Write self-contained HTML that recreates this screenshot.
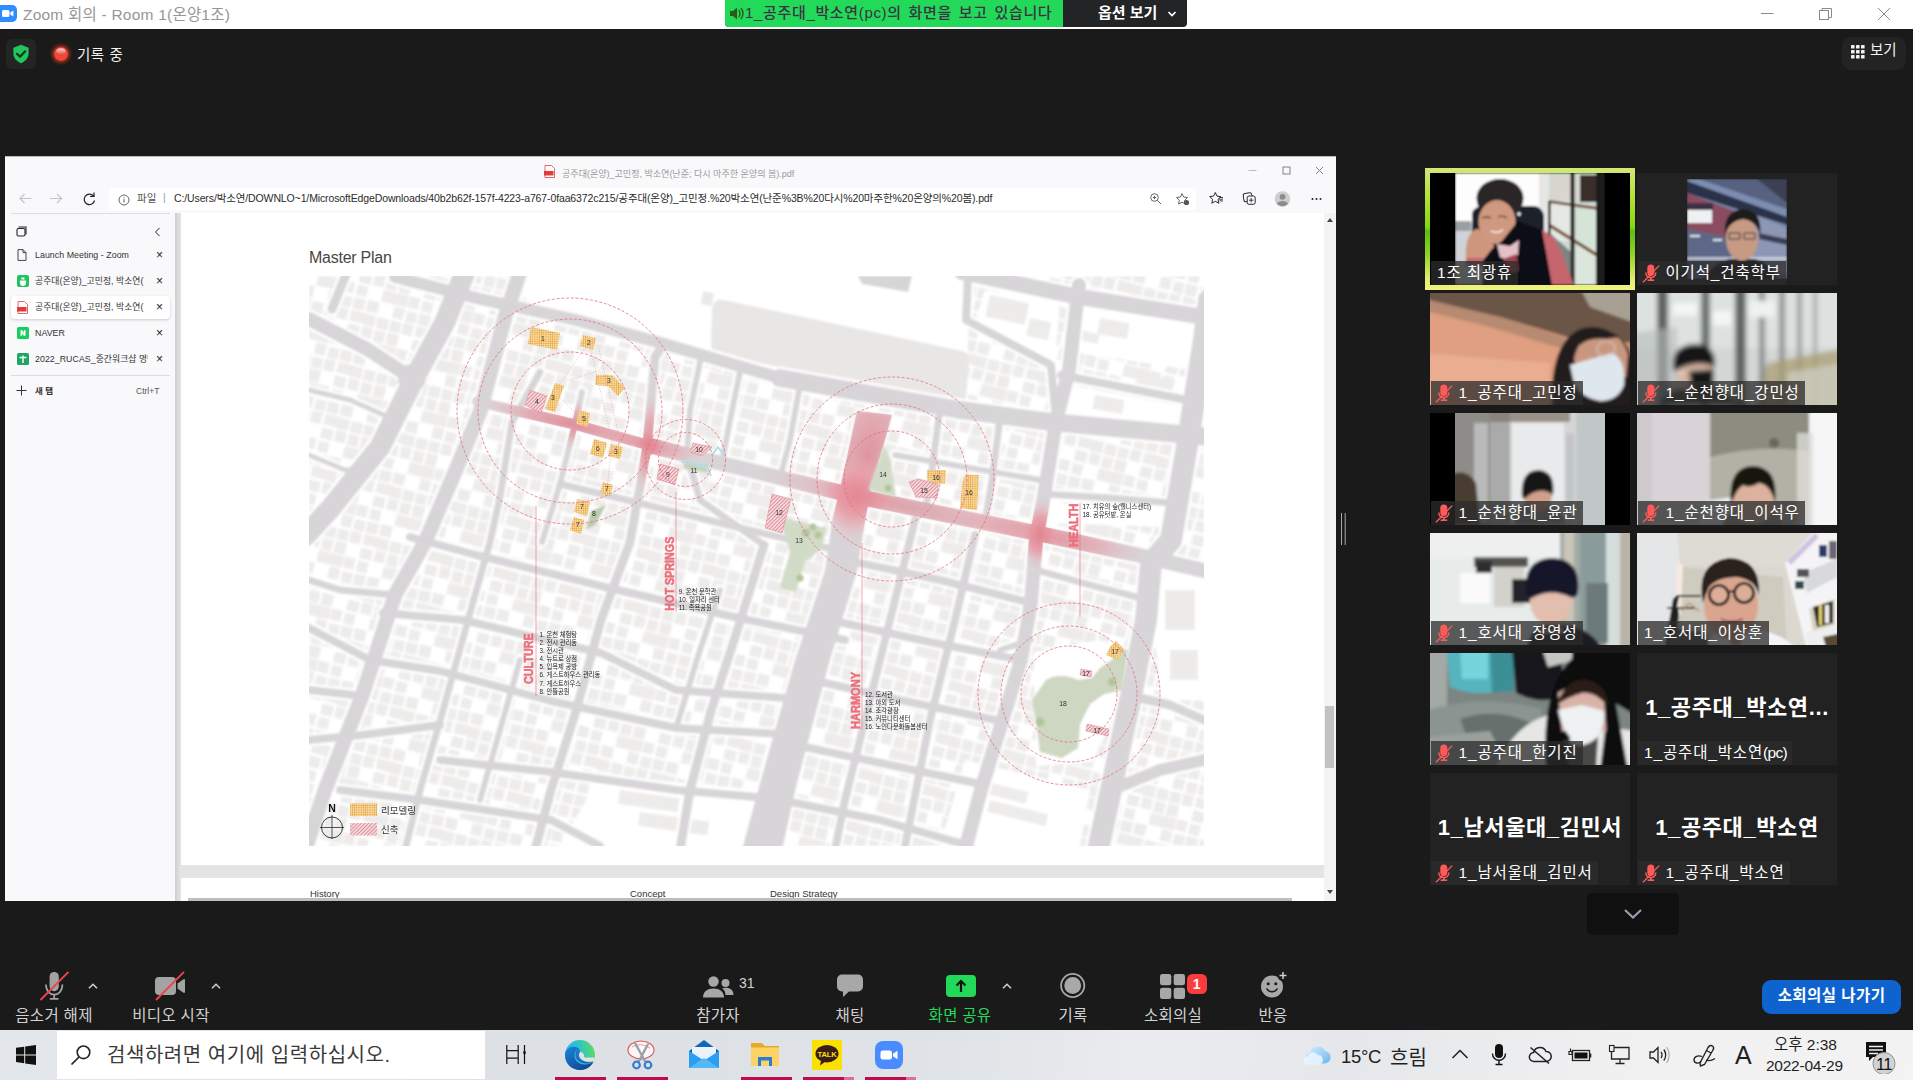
<!DOCTYPE html>
<html lang="ko">
<head>
<meta charset="utf-8">
<title>Zoom 회의 - Room 1(온양1조)</title>
<style>
*{box-sizing:border-box;margin:0;padding:0}
html,body{width:1913px;height:1080px;overflow:hidden;background:#1a1a1a}
body{position:relative;font-family:"Liberation Sans","Noto Sans CJK KR",sans-serif;color:#fff}
.abs{position:absolute}
#titlebar{position:absolute;left:0;top:0;width:1913px;height:29px;background:#fff}
#titlebar .ttl{position:absolute;left:23px;top:2px;font-size:15.5px;color:#969696;white-space:nowrap;letter-spacing:.22px}
#banner{position:absolute;left:725px;top:0;width:462px;height:27px;border-radius:0 0 4px 4px;background:#232426;overflow:hidden}
#banner .g{position:absolute;left:0;top:0;width:338px;height:27px;background:#23d959;color:#3a3442;font-size:15px;font-weight:500;white-space:nowrap;padding-left:20px;line-height:26px;letter-spacing:.66px;word-spacing:2px}
#banner .o{position:absolute;left:338px;top:0;width:124px;height:27px;color:#fff;font-size:15px;font-weight:700;text-align:left;padding-left:35px;line-height:26px;white-space:nowrap}

#shield{position:absolute;left:6px;top:39px;width:30px;height:30px;border-radius:6px;background:#242424}
#rec{position:absolute;left:77px;top:43px;font-size:14.5px;color:#f2f2f2;white-space:nowrap;letter-spacing:.3px;word-spacing:1px}
#viewbtn{position:absolute;left:1842px;top:37px;width:64px;height:33px;border-radius:9px;background:#232323;color:#f4f4f4;font-size:14.5px;line-height:27px;padding-left:28px;white-space:nowrap}
.tile{position:absolute;width:200px;height:112px;background:#222;overflow:hidden}
.tile svg.v{position:absolute;left:0;top:0}
.lbl{position:absolute;left:0;bottom:0;height:24px;background:rgba(44,44,44,.76);color:#fff;font-size:15.5px;line-height:23px;white-space:nowrap;padding:0 5.500px 0 27.500px;letter-spacing:.85px}
.lbl.nm{padding-left:6px}
.lbl svg{position:absolute;left:3.500px;top:2px}
.big{position:absolute;left:0;width:200px;text-align:center;color:#fff;font-weight:700;font-size:22px;white-space:nowrap;letter-spacing:.6px}
#more{position:absolute;left:1587px;top:893px;width:92px;height:42px;border-radius:5px;background:#101010}
</style>
</head>
<body>
<!-- TITLEBAR -->
<div id="titlebar">
  <svg class="abs" style="left:0;top:5px" width="18" height="18" viewBox="0 0 18 18"><rect x="-4" y="0" width="21" height="17" rx="5" fill="#2d8cff"/><rect x="2" y="5" width="7.5" height="7" rx="1.6" fill="#fff"/><path d="M10.3 7.6 L13.4 5.6 V11.4 L10.3 9.4Z" fill="#fff"/></svg>
  <div class="ttl">Zoom 회의 - Room 1(온양1조)</div>
  <svg class="abs" style="left:1750px;top:0" width="163" height="29" viewBox="0 0 163 29"><g stroke="#8a8a8a" stroke-width="1" fill="none"><path d="M11 13.5H23.500"/><rect x="69.500" y="10.500" width="9" height="9"/><path d="M72 10.500V8.500H81.500V17.500H79"/><path d="M128 8 L140 20 M140 8 L128 20"/></g></svg>
</div>
<div id="banner">
  <div class="g" id="bg"><svg class="abs" style="left:4px;top:6px" width="16" height="15" viewBox="0 0 16 15"><path d="M1 5h3l4-3.500v12L4 10H1z" fill="#2a5a16"/><path d="M10 4.500c1.300 1.500 1.300 4.500 0 6M12.200 2.500c2.400 2.800 2.400 7.200 0 10" stroke="#2a5a16" stroke-width="1.400" fill="none" stroke-linecap="round"/></svg>1_공주대_박소연(pc)의 화면을 보고 있습니다</div>
  <div class="o">옵션 보기<svg class="abs" style="left:104px;top:10px" width="10" height="8" viewBox="0 0 10 8"><path d="M1.500 2 L5 5.500 L8.500 2" stroke="#fff" stroke-width="1.700" fill="none"/></svg></div>
</div>
<div id="shield"><svg class="abs" style="left:6px;top:5px" width="18" height="20" viewBox="0 0 18 20"><path d="M9 .8 L16.600 3.800 V9.500 C16.600 14 13.200 17.500 9 19.200 C4.800 17.500 1.400 14 1.400 9.500 V3.800Z" fill="#22c55e"/><path d="M5 9.800 L8 12.800 L13.200 7.300" stroke="#14301d" stroke-width="2.100" fill="none" stroke-linecap="round" stroke-linejoin="round"/></svg></div>
<svg class="abs" style="left:47px;top:40px" width="28" height="28" viewBox="0 0 28 28"><defs><radialGradient id="rg" cx=".5" cy=".5" r=".5"><stop offset="0" stop-color="#ff6a5a"/><stop offset=".5" stop-color="#f0493c"/><stop offset=".62" stop-color="#b2301f" stop-opacity=".75"/><stop offset="1" stop-color="#5a1a10" stop-opacity="0"/></radialGradient><linearGradient id="rh" x1="0" y1="0" x2="0" y2="1"><stop offset="0" stop-color="#fff" stop-opacity=".75"/><stop offset="1" stop-color="#fff" stop-opacity=".05"/></linearGradient></defs><circle cx="14" cy="14" r="12" fill="url(#rg)"/><circle cx="14" cy="14" r="6.500" fill="#ee4a3c"/><ellipse cx="14" cy="11.300" rx="4.600" ry="3" fill="url(#rh)"/></svg>
<div id="rec">기록 중</div>
<div id="viewbtn"><svg class="abs" style="left:9px;top:8px" width="14" height="14" viewBox="0 0 14 14" fill="#f0f0f0"><rect x="0" y="0" width="3.600" height="3.600" rx=".6"/><rect x="5" y="0" width="3.600" height="3.600" rx=".6"/><rect x="10" y="0" width="3.600" height="3.600" rx=".6"/><rect x="0" y="5" width="3.600" height="3.600" rx=".6"/><rect x="5" y="5" width="3.600" height="3.600" rx=".6"/><rect x="10" y="5" width="3.600" height="3.600" rx=".6"/><rect x="0" y="10" width="3.600" height="3.600" rx=".6"/><rect x="5" y="10" width="3.600" height="3.600" rx=".6"/><rect x="10" y="10" width="3.600" height="3.600" rx=".6"/></svg>보기</div>
<!-- SHARE -->
<style>
#share{position:absolute;left:5px;top:156px;width:1331px;height:745px;background:#fff;overflow:hidden;font-family:"Liberation Sans","Noto Sans CJK KR",sans-serif;color:#333}
#share .chrome{position:absolute;left:0;top:0;width:1331px;height:57px;background:#f9f8fa;border-top:1px solid #b9b9b9}
#share .ttl{position:absolute;left:557px;top:9px;font-size:9.100px;color:#9b9b9b;white-space:nowrap;letter-spacing:-.05px}
#addr{position:absolute;left:104px;top:31px;width:1087px;height:22px;border-radius:4px;background:#fff;font-size:10.500px;line-height:21px;white-space:nowrap;color:#2b2b2b}
#side{position:absolute;left:0;top:57px;width:170px;height:688px;background:#f9f8fa;font-size:8.800px;color:#333}
#side .it{position:absolute;left:6px;width:159px;height:23px;border-radius:4px;line-height:22px;padding-left:24px;white-space:nowrap;overflow:hidden;letter-spacing:.05px}
#side .it .tx{display:block;width:113px;overflow:hidden;white-space:nowrap}
#side .it .x{position:absolute;right:7px;top:0;font-size:12px;color:#222}
#side .it svg{position:absolute;left:6px;top:5px}
#side .it.on{background:#fff;box-shadow:0 1px 3px rgba(0,0,0,.18)}
#pdf{position:absolute;left:170px;top:57px;width:1161px;height:688px;background:linear-gradient(90deg,#cfcfd0 0,#e2e2e3 5px,#e4e4e5 6px);overflow:hidden}
#pdf .pg{position:absolute;left:6px;width:1143px;background:#fff}
</style>
<div id="share">
 <div class="chrome">
  <svg class="abs" style="left:539px;top:8px" width="11" height="13" viewBox="0 0 11 13"><path d="M1 .5h6.500l3 3v9h-9.500z" fill="#fff" stroke="#e05656" stroke-width=".9"/><rect x="0" y="6" width="9.500" height="4.500" fill="#e23b3b"/></svg>
  <div class="ttl">공주대(온양)_고민정, 박소연(난준; 다시 마주한 온양의 봄).pdf</div>
  <svg class="abs" style="left:1235px;top:4px" width="96" height="20" viewBox="0 0 96 20" fill="none" stroke="#777" stroke-width=".9"><path d="M8.500 9.500h8" stroke="#b5b5b5"/><rect x="43" y="6" width="7" height="7"/><path d="M76 6 l7 7 M83 6 l-7 7"/></svg>
  <svg class="abs" style="left:12px;top:34px" width="84" height="16" viewBox="0 0 84 16" fill="none" stroke-width="1.100"><path d="M14.500 7.500H3M7.500 3 L3 7.500 L7.500 12" stroke="#c4c4c4"/><path d="M33 7.500H44.500M40 3 L44.500 7.500 L40 12" stroke="#c4c4c4"/><path d="M76.500 5.200A5.200 5.200 0 1 0 77.500 9.500M77 1.500V5.500H73" stroke="#222" stroke-width="1.200"/></svg>
  <div id="addr"><svg class="abs" style="left:9px;top:6px" width="12" height="12" viewBox="0 0 12 12"><circle cx="6" cy="6" r="5" fill="none" stroke="#555" stroke-width=".9"/><path d="M6 5.200v3.300M6 3.200v1" stroke="#555" stroke-width="1"/></svg><span class="abs" style="left:28px;top:0;color:#555">파일</span><span class="abs" style="left:54px;top:-1px;color:#999">|</span><span class="abs" style="left:65px;top:0;letter-spacing:-.12px">C:/Users/박소연/DOWNLO~1/MicrosoftEdgeDownloads/40b2b62f-157f-4223-a767-0faa6372c215/공주대(온양)_고민정.%20박소연(난준%3B%20다시%20마주한%20온양의%20봄).pdf</span>
   <svg class="abs" style="left:1040px;top:4px" width="44" height="14" viewBox="0 0 44 14" fill="none" stroke="#555" stroke-width=".9"><circle cx="5.500" cy="5.500" r="3.800"/><path d="M8.300 8.300L12 12M3.800 5.500h3.400M5.500 3.800v3.400"/><path d="M33 1.500l1.700 3.500l3.800.5l-2.800 2.700l.7 3.800l-3.400-1.800l-3.400 1.800l.7-3.800l-2.800-2.700l3.800-.5z"/><circle cx="37.500" cy="10.500" r="2.600" fill="#555" stroke="none"/></svg>
  </div>
  <svg class="abs" style="left:1203px;top:34px" width="120" height="16" viewBox="0 0 120 16" fill="none" stroke="#2a2a2a" stroke-width="1"><path d="M7.300 1.500l1.700 3.600l3.900.5l-2.900 2.700l.8 3.900l-3.500-1.900l-3.500 1.900l.8-3.900l-2.900-2.700l3.900-.5z"/><path d="M11.500 6.500h3.500M11 8.200h4M11.500 9.900h3.500" stroke-width=".9"/><rect x="35.500" y="2" width="8.500" height="8.500" rx="2" transform="rotate(-8 40 6)"/><rect x="39.200" y="5" width="8" height="8.300" rx="1.800" fill="#f9f8fa"/><path d="M43.200 7v4.400M41 9.200h4.400" stroke-width=".9"/><circle cx="74.500" cy="8" r="7.800" fill="#cfcdcd" stroke="none"/><circle cx="74.500" cy="5.800" r="2.900" fill="#8f8b8b" stroke="none"/><path d="M69 12.600c1-3.600 10-3.600 11 0c-2.800 3.600-8.200 3.600-11 0z" fill="#8f8b8b" stroke="none"/><circle cx="104.500" cy="8" r="1" fill="#222" stroke="none"/><circle cx="108.500" cy="8" r="1" fill="#222" stroke="none"/><circle cx="112.500" cy="8" r="1" fill="#222" stroke="none"/></svg>
 </div>
 <div id="side"><div class="abs" style="left:6px;top:0;width:159px;height:1px;background:#dedee0"></div>
  <svg class="abs" style="left:11px;top:13px" width="11" height="11" viewBox="0 0 11 11" fill="none" stroke="#222" stroke-width="1.100"><rect x="1" y="2.500" width="8" height="7.500" rx="1.500"/><path d="M2.500 1h7.500v7.500"/></svg>
  <svg class="abs" style="left:149px;top:14px" width="7" height="10" viewBox="0 0 7 10"><path d="M5.500 1 L1.500 5 L5.500 9" stroke="#222" stroke-width="1" fill="none"/></svg>
  <div class="it" style="top:31px"><svg width="10" height="12" viewBox="0 0 10 12"><path d="M1 .6h5l3 3v7.800h-8z M6 .6v3h3" fill="none" stroke="#333" stroke-width=".9"/></svg><span class="tx">Launch Meeting - Zoom</span><span class="x">×</span></div>
  <div class="it" style="top:57px"><svg width="12" height="12" viewBox="0 0 12 12"><rect width="12" height="12" rx="2" fill="#1ec45f"/><path d="M3 5.500h6v2.500a3 3 0 0 1-6 0z" fill="#fff"/><rect x="4.500" y="2.500" width="3" height="2" fill="#fff"/></svg><span class="tx">공주대(온양)_고민정, 박소연(</span><span class="x">×</span></div>
  <div class="it on" style="top:83px"><svg width="11" height="13" viewBox="0 0 11 13"><path d="M1 .5h6.500l3 3v9h-9.500z" fill="#fff" stroke="#e05656" stroke-width=".9"/><rect x="0" y="6" width="9.500" height="4.500" fill="#e23b3b"/></svg><span class="tx">공주대(온양)_고민정, 박소연(</span><span class="x">×</span></div>
  <div class="it" style="top:109px"><svg width="12" height="12" viewBox="0 0 12 12"><rect width="12" height="12" rx="1.500" fill="#19ce60"/><path d="M3.500 3.200h1.800l1.500 2.700V3.200h1.700v5.600H6.700L5.200 6.200v2.600H3.500z" fill="#fff"/></svg><span class="tx">NAVER</span><span class="x">×</span></div>
  <div class="it" style="top:135px"><svg width="12" height="12" viewBox="0 0 12 12"><rect width="12" height="12" rx="1.500" fill="#1fa463"/><path d="M2.500 4.500h7M6 2.500v7.500" stroke="#fff" stroke-width="1.400"/></svg><span class="tx">2022_RUCAS_중간워크샵 명단</span><span class="x">×</span></div>
  <div class="abs" style="left:6px;top:162px;width:159px;height:1px;background:#dcdcdc"></div>
  <svg class="abs" style="left:11px;top:172px" width="11" height="11" viewBox="0 0 11 11"><path d="M5.500 .5v10M.5 5.500h10" stroke="#333" stroke-width="1"/></svg>
  <div class="abs" style="left:30px;top:167px;line-height:22px;font-weight:700;font-size:8.500px">새 탭</div>
  <div class="abs" style="left:131px;top:167px;line-height:22px;font-size:8.500px;color:#555">Ctrl+T</div>
 </div>
 <div id="pdf">
  <div class="pg" style="top:0;height:652px"></div>
  <div class="pg" style="top:665px;height:30px"></div>
  <div class="abs" style="left:134px;top:36px;font-size:16px;color:#474747;letter-spacing:-.25px">Master Plan</div>
  <!--MAPSTART--><svg class="abs" style="left:134px;top:63px" width="895" height="570" viewBox="309 276 895 570" font-family="Liberation Sans,Noto Sans CJK KR,sans-serif">
<defs>
<pattern id="bp" width="67.0" height="53.6" patternUnits="userSpaceOnUse" patternTransform="rotate(14)"><rect width="67.0" height="53.6" fill="#fff"/><rect x="0.6" y="1.0" width="10.8" height="11.6" fill="#eeeceb"/><rect x="0.6" y="27.4" width="10.7" height="11.3" fill="#eeeceb"/><rect x="1.6" y="42.2" width="10.8" height="11.0" fill="#eeeceb"/><rect x="14.2" y="1.0" width="17.2" height="10.7" fill="#eeeceb"/><rect x="14.2" y="14.9" width="11.9" height="10.9" fill="#eeeceb"/><rect x="14.3" y="28.5" width="10.7" height="10.7" fill="#eeeceb"/><rect x="14.2" y="41.6" width="11.5" height="11.3" fill="#eeeceb"/><rect x="28.2" y="1.3" width="11.5" height="11.4" fill="#eeeceb"/><rect x="28.6" y="14.1" width="10.8" height="11.3" fill="#eeeceb"/><rect x="27.9" y="41.0" width="11.8" height="11.5" fill="#eeeceb"/><rect x="41.5" y="1.6" width="11.5" height="11.3" fill="#eeeceb"/><rect x="41.9" y="14.7" width="10.7" height="11.7" fill="#eeeceb"/><rect x="40.7" y="27.7" width="17.5" height="11.7" fill="#eeeceb"/><rect x="54.8" y="1.8" width="10.8" height="11.0" fill="#eeeceb"/><rect x="54.9" y="14.3" width="11.5" height="12.0" fill="#eeeceb"/><rect x="55.4" y="27.4" width="11.2" height="12.0" fill="#eeeceb"/><rect x="55.0" y="41.0" width="11.0" height="11.4" fill="#eeeceb"/></pattern>
<pattern id="ho" width="2.200" height="2.200" patternUnits="userSpaceOnUse"><rect width="2.200" height="2.200" fill="#f6dca6"/><path d="M0 0H2.200M0 0V2.200" stroke="#e79a2a" stroke-width=".9"/></pattern>
<pattern id="hr" width="2.600" height="2.600" patternUnits="userSpaceOnUse" patternTransform="rotate(-45)"><rect width="2.600" height="2.600" fill="#f3d9dc"/><path d="M0 0H2.600" stroke="#cf4d5f" stroke-width="1"/></pattern>
<radialGradient id="rr"><stop offset="0" stop-color="#e17d8a" stop-opacity=".92"/><stop offset=".5" stop-color="#e8939e" stop-opacity=".72"/><stop offset="1" stop-color="#efb4bb" stop-opacity="0"/></radialGradient>
<filter id="pk" x="-10%" y="-10%" width="120%" height="120%"><feGaussianBlur stdDeviation=".8"/></filter>
<clipPath id="mc"><rect x="309" y="276" width="895" height="570"/></clipPath>
</defs>
<filter id="sf" x="0" y="0" width="100%" height="100%"><feGaussianBlur stdDeviation=".8"/></filter>
<g clip-path="url(#mc)">
<g filter="url(#sf)">
<rect x="309" y="276" width="895" height="570" fill="url(#bp)"/>
<polygon points="527,276 968,276 968,412 860,398 780,372 661,337 576,314 527,302" fill="#fff"/>
<polygon points="1085,300 1204,318 1204,372 1075,352" fill="#fff"/>
<polygon points="1070,385 1190,408 1185,440 1062,425" fill="#fff"/>
<polygon points="985,290 1060,300 1055,360 975,322" fill="#fff"/>
<polygon points="600,775 760,790 745,846 560,846" fill="#fff"/>
<polygon points="965,760 1090,790 1080,846 940,846" fill="#fff"/>
<polygon points="1150,560 1204,560 1204,700 1160,700" fill="#fff"/>
<polygon points="1050,503 1168,508 1166,527 1048,523" fill="#fff"/>
<polygon points="1034,652 1100,640 1128,648 1122,700 1092,762 1036,766" fill="#fff"/>
<path d="M724 300 L962 351 Q970 353 969 361 L966 398 Q965 407 956 405 L718 354 Q711 352 711 344 L712 308 Q713 298 724 300Z" fill="#e9e7e6"/>
<rect x="702" y="292" width="11" height="13" fill="#ebe9e8" transform="rotate(12 707 298)"/>
<path d="M858 276 H912 L908 292 L862 284Z" fill="#d8d5d8"/>
<rect x="990" y="295" width="40" height="22" fill="#eeeceb" transform="rotate(12 990 295)"/>
<rect x="1030" y="318" width="22" height="18" fill="#eeeceb" transform="rotate(12 1030 318)"/>
<rect x="1100" y="318" width="30" height="16" fill="#eeeceb" transform="rotate(10 1100 318)"/>
<rect x="1140" y="372" width="36" height="22" fill="#eeeceb" transform="rotate(14 1140 372)"/>
<rect x="1095" y="395" width="30" height="14" fill="#eeeceb" transform="rotate(10 1095 395)"/>
<rect x="1080" y="330" width="20" height="10" fill="#eeeceb" transform="rotate(12 1080 330)"/>
<rect x="620" y="790" width="60" height="14" fill="#eeeceb" transform="rotate(8 620 790)"/>
<rect x="640" y="812" width="70" height="14" fill="#eeeceb" transform="rotate(8 640 812)"/>
<rect x="980" y="780" width="50" height="12" fill="#eeeceb" transform="rotate(14 980 780)"/>
<rect x="990" y="800" width="60" height="12" fill="#eeeceb" transform="rotate(14 990 800)"/>
<rect x="1165" y="590" width="30" height="40" fill="#eeeceb" transform="rotate(0 1165 590)"/>
<rect x="1170" y="650" width="28" height="30" fill="#eeeceb" transform="rotate(0 1170 650)"/>
<polyline points="309,319 367,349 410,377" fill="none" stroke="#fff" stroke-width="19" stroke-linejoin="round" stroke-linecap="round"/>
<polyline points="465,272 445,322 415,377 380,447 330,509 305,536" fill="none" stroke="#fff" stroke-width="26" stroke-linejoin="round" stroke-linecap="round"/>
<polyline points="347,272 332,309" fill="none" stroke="#fff" stroke-width="14" stroke-linejoin="round" stroke-linecap="round"/>
<polyline points="395,277 476,298 576,320 661,343 780,378" fill="none" stroke="#fff" stroke-width="17" stroke-linejoin="round" stroke-linecap="round"/>
<polyline points="780,378 960,410 1051,422 1190,435 1210,437" fill="none" stroke="#fff" stroke-width="23" stroke-linejoin="round" stroke-linecap="round"/>
<polyline points="520,272 505,317 480,412 455,472 425,542 395,595 362,696 325,790 305,850" fill="none" stroke="#fff" stroke-width="20" stroke-linejoin="round" stroke-linecap="round"/>
<polyline points="477,401.6 575,424.5 648,445 687,455 853,495.6 1036,533 1138,555 1210,572" fill="none" stroke="#fff" stroke-width="15" stroke-linejoin="round" stroke-linecap="round"/>
<polyline points="648,445 687,455 853,495.6 1036,533 1138,555 1210,572" fill="none" stroke="#fff" stroke-width="20" stroke-linejoin="round" stroke-linecap="round"/>
<polyline points="540,372 512,422 500,497 490,542 475,595 440,721 420,790 405,850" fill="none" stroke="#fff" stroke-width="12" stroke-linejoin="round" stroke-linecap="round"/>
<polyline points="582,392 575,424 560,484 542,542" fill="none" stroke="#fff" stroke-width="11" stroke-linejoin="round" stroke-linecap="round"/>
<polyline points="664,343 655,357 647,447 630,542 601,620 576,711 551,790 535,850" fill="none" stroke="#fff" stroke-width="14" stroke-linejoin="round" stroke-linecap="round"/>
<polyline points="1079,285 1069,370 1056,421 1044,496 1036,540 1031,603 1021,660 981,790 965,850" fill="none" stroke="#fff" stroke-width="19" stroke-linejoin="round" stroke-linecap="round"/>
<polyline points="1209,300 1204,340 1187,446 1171,540 1151,563 1146,620 1131,696 1111,790 1098,850" fill="none" stroke="#fff" stroke-width="27" stroke-linejoin="round" stroke-linecap="round"/>
<polyline points="962,272 1074,296 1210,318" fill="none" stroke="#fff" stroke-width="21" stroke-linejoin="round" stroke-linecap="round"/>
<polyline points="968,277 966,320 1051,365 1056,420" fill="none" stroke="#fff" stroke-width="13" stroke-linejoin="round" stroke-linecap="round"/>
<polyline points="1061,375 1187,400" fill="none" stroke="#fff" stroke-width="13" stroke-linejoin="round" stroke-linecap="round"/>
<polyline points="410,537 476,555 609,588 739,618 845,640" fill="none" stroke="#fff" stroke-width="13" stroke-linejoin="round" stroke-linecap="round"/>
<polyline points="383,613 463,620 601,653 676,690 812,700" fill="none" stroke="#fff" stroke-width="13" stroke-linejoin="round" stroke-linecap="round"/>
<polyline points="309,628 370,660 440,671 551,701 676,728 800,735" fill="none" stroke="#fff" stroke-width="13" stroke-linejoin="round" stroke-linecap="round"/>
<polyline points="309,740 362,735 440,725" fill="none" stroke="#fff" stroke-width="13" stroke-linejoin="round" stroke-linecap="round"/>
<polyline points="440,760 551,772 676,790 790,800" fill="none" stroke="#fff" stroke-width="13" stroke-linejoin="round" stroke-linecap="round"/>
<polyline points="340,790 420,800 551,820 600,846" fill="none" stroke="#fff" stroke-width="13" stroke-linejoin="round" stroke-linecap="round"/>
<polyline points="560,484 647,505 740,528 845,552" fill="none" stroke="#fff" stroke-width="12" stroke-linejoin="round" stroke-linecap="round"/>
<polyline points="764,545 739,625 711,711 690,790 680,850" fill="none" stroke="#fff" stroke-width="14" stroke-linejoin="round" stroke-linecap="round"/>
<polyline points="687,455 700,500 764,545" fill="none" stroke="#fff" stroke-width="12" stroke-linejoin="round" stroke-linecap="round"/>
<polyline points="720,590 700,650 676,728" fill="none" stroke="#fff" stroke-width="11" stroke-linejoin="round" stroke-linecap="round"/>
<polyline points="520,660 500,730 480,800" fill="none" stroke="#fff" stroke-width="11" stroke-linejoin="round" stroke-linecap="round"/>
<polyline points="845,560 940,580 1031,603" fill="none" stroke="#fff" stroke-width="13" stroke-linejoin="round" stroke-linecap="round"/>
<polyline points="830,620 930,642 1021,660" fill="none" stroke="#fff" stroke-width="13" stroke-linejoin="round" stroke-linecap="round"/>
<polyline points="812,680 900,700 1005,722" fill="none" stroke="#fff" stroke-width="13" stroke-linejoin="round" stroke-linecap="round"/>
<polyline points="795,745 890,765 985,785" fill="none" stroke="#fff" stroke-width="13" stroke-linejoin="round" stroke-linecap="round"/>
<polyline points="780,800 880,820 970,846" fill="none" stroke="#fff" stroke-width="13" stroke-linejoin="round" stroke-linecap="round"/>
<polyline points="915,520 895,600 870,700 845,800 835,850" fill="none" stroke="#fff" stroke-width="13" stroke-linejoin="round" stroke-linecap="round"/>
<polyline points="975,535 955,620 930,720 905,846" fill="none" stroke="#fff" stroke-width="13" stroke-linejoin="round" stroke-linecap="round"/>
<polyline points="700,362 690,410 687,455" fill="none" stroke="#fff" stroke-width="11" stroke-linejoin="round" stroke-linecap="round"/>
<polyline points="740,372 730,420 722,462" fill="none" stroke="#fff" stroke-width="11" stroke-linejoin="round" stroke-linecap="round"/>
<polyline points="800,385 790,440 780,478" fill="none" stroke="#fff" stroke-width="11" stroke-linejoin="round" stroke-linecap="round"/>
<polyline points="940,408 932,470 925,512" fill="none" stroke="#fff" stroke-width="12" stroke-linejoin="round" stroke-linecap="round"/>
<polyline points="1000,418 992,480 985,522" fill="none" stroke="#fff" stroke-width="12" stroke-linejoin="round" stroke-linecap="round"/>
<polyline points="895,455 1040,480" fill="none" stroke="#fff" stroke-width="11" stroke-linejoin="round" stroke-linecap="round"/>
<polyline points="1044,494 1110,498 1172,503" fill="none" stroke="#fff" stroke-width="12" stroke-linejoin="round" stroke-linecap="round"/>
<polyline points="1036,570 1090,585 1148,600" fill="none" stroke="#fff" stroke-width="12" stroke-linejoin="round" stroke-linecap="round"/>
<polyline points="1031,640 1000,650" fill="none" stroke="#fff" stroke-width="11" stroke-linejoin="round" stroke-linecap="round"/>
<polyline points="1111,790 1160,770 1204,760" fill="none" stroke="#fff" stroke-width="17" stroke-linejoin="round" stroke-linecap="round"/>
<polyline points="1131,696 1170,705 1204,720" fill="none" stroke="#fff" stroke-width="14" stroke-linejoin="round" stroke-linecap="round"/>
<polyline points="309,390 350,400 395,420" fill="none" stroke="#fff" stroke-width="10" stroke-linejoin="round" stroke-linecap="round"/>
<polyline points="309,455 345,470 368,470" fill="none" stroke="#fff" stroke-width="10" stroke-linejoin="round" stroke-linecap="round"/>
<polyline points="309,580 340,590 395,595" fill="none" stroke="#fff" stroke-width="12" stroke-linejoin="round" stroke-linecap="round"/>
<polyline points="309,690 362,696" fill="none" stroke="#fff" stroke-width="13" stroke-linejoin="round" stroke-linecap="round"/>
<polygon points="857,411 892,415 871,489 865,521 857.5,570 830,660 797,783 782,850 742,850 760,783 795,660 825,570 832,521 840,489" fill="#fff" stroke="#fff" stroke-width="5" stroke-linejoin="round"/>
<polyline points="309,319 367,349 410,377" fill="none" stroke="#d8d5d8" stroke-width="14" stroke-linejoin="round" stroke-linecap="round"/>
<polyline points="465,272 445,322 415,377 380,447 330,509 305,536" fill="none" stroke="#d8d5d8" stroke-width="21" stroke-linejoin="round" stroke-linecap="round"/>
<polyline points="347,272 332,309" fill="none" stroke="#d8d5d8" stroke-width="9" stroke-linejoin="round" stroke-linecap="round"/>
<polyline points="395,277 476,298 576,320 661,343 780,378" fill="none" stroke="#d8d5d8" stroke-width="12" stroke-linejoin="round" stroke-linecap="round"/>
<polyline points="780,378 960,410 1051,422 1190,435 1210,437" fill="none" stroke="#d8d5d8" stroke-width="18" stroke-linejoin="round" stroke-linecap="round"/>
<polyline points="520,272 505,317 480,412 455,472 425,542 395,595 362,696 325,790 305,850" fill="none" stroke="#d8d5d8" stroke-width="15" stroke-linejoin="round" stroke-linecap="round"/>
<polyline points="477,401.6 575,424.5 648,445 687,455 853,495.6 1036,533 1138,555 1210,572" fill="none" stroke="#d8d5d8" stroke-width="10" stroke-linejoin="round" stroke-linecap="round"/>
<polyline points="648,445 687,455 853,495.6 1036,533 1138,555 1210,572" fill="none" stroke="#d8d5d8" stroke-width="15" stroke-linejoin="round" stroke-linecap="round"/>
<polyline points="540,372 512,422 500,497 490,542 475,595 440,721 420,790 405,850" fill="none" stroke="#d8d5d8" stroke-width="7" stroke-linejoin="round" stroke-linecap="round"/>
<polyline points="582,392 575,424 560,484 542,542" fill="none" stroke="#d8d5d8" stroke-width="6" stroke-linejoin="round" stroke-linecap="round"/>
<polyline points="664,343 655,357 647,447 630,542 601,620 576,711 551,790 535,850" fill="none" stroke="#d8d5d8" stroke-width="9" stroke-linejoin="round" stroke-linecap="round"/>
<polyline points="1079,285 1069,370 1056,421 1044,496 1036,540 1031,603 1021,660 981,790 965,850" fill="none" stroke="#d8d5d8" stroke-width="14" stroke-linejoin="round" stroke-linecap="round"/>
<polyline points="1209,300 1204,340 1187,446 1171,540 1151,563 1146,620 1131,696 1111,790 1098,850" fill="none" stroke="#d8d5d8" stroke-width="22" stroke-linejoin="round" stroke-linecap="round"/>
<polyline points="962,272 1074,296 1210,318" fill="none" stroke="#d8d5d8" stroke-width="16" stroke-linejoin="round" stroke-linecap="round"/>
<polyline points="968,277 966,320 1051,365 1056,420" fill="none" stroke="#d8d5d8" stroke-width="8" stroke-linejoin="round" stroke-linecap="round"/>
<polyline points="1061,375 1187,400" fill="none" stroke="#d8d5d8" stroke-width="8" stroke-linejoin="round" stroke-linecap="round"/>
<polyline points="410,537 476,555 609,588 739,618 845,640" fill="none" stroke="#d8d5d8" stroke-width="8" stroke-linejoin="round" stroke-linecap="round"/>
<polyline points="383,613 463,620 601,653 676,690 812,700" fill="none" stroke="#d8d5d8" stroke-width="8" stroke-linejoin="round" stroke-linecap="round"/>
<polyline points="309,628 370,660 440,671 551,701 676,728 800,735" fill="none" stroke="#d8d5d8" stroke-width="8" stroke-linejoin="round" stroke-linecap="round"/>
<polyline points="309,740 362,735 440,725" fill="none" stroke="#d8d5d8" stroke-width="8" stroke-linejoin="round" stroke-linecap="round"/>
<polyline points="440,760 551,772 676,790 790,800" fill="none" stroke="#d8d5d8" stroke-width="8" stroke-linejoin="round" stroke-linecap="round"/>
<polyline points="340,790 420,800 551,820 600,846" fill="none" stroke="#d8d5d8" stroke-width="8" stroke-linejoin="round" stroke-linecap="round"/>
<polyline points="560,484 647,505 740,528 845,552" fill="none" stroke="#d8d5d8" stroke-width="7" stroke-linejoin="round" stroke-linecap="round"/>
<polyline points="764,545 739,625 711,711 690,790 680,850" fill="none" stroke="#d8d5d8" stroke-width="9" stroke-linejoin="round" stroke-linecap="round"/>
<polyline points="687,455 700,500 764,545" fill="none" stroke="#d8d5d8" stroke-width="7" stroke-linejoin="round" stroke-linecap="round"/>
<polyline points="720,590 700,650 676,728" fill="none" stroke="#d8d5d8" stroke-width="6" stroke-linejoin="round" stroke-linecap="round"/>
<polyline points="520,660 500,730 480,800" fill="none" stroke="#d8d5d8" stroke-width="6" stroke-linejoin="round" stroke-linecap="round"/>
<polyline points="845,560 940,580 1031,603" fill="none" stroke="#d8d5d8" stroke-width="8" stroke-linejoin="round" stroke-linecap="round"/>
<polyline points="830,620 930,642 1021,660" fill="none" stroke="#d8d5d8" stroke-width="8" stroke-linejoin="round" stroke-linecap="round"/>
<polyline points="812,680 900,700 1005,722" fill="none" stroke="#d8d5d8" stroke-width="8" stroke-linejoin="round" stroke-linecap="round"/>
<polyline points="795,745 890,765 985,785" fill="none" stroke="#d8d5d8" stroke-width="8" stroke-linejoin="round" stroke-linecap="round"/>
<polyline points="780,800 880,820 970,846" fill="none" stroke="#d8d5d8" stroke-width="8" stroke-linejoin="round" stroke-linecap="round"/>
<polyline points="915,520 895,600 870,700 845,800 835,850" fill="none" stroke="#d8d5d8" stroke-width="8" stroke-linejoin="round" stroke-linecap="round"/>
<polyline points="975,535 955,620 930,720 905,846" fill="none" stroke="#d8d5d8" stroke-width="8" stroke-linejoin="round" stroke-linecap="round"/>
<polyline points="700,362 690,410 687,455" fill="none" stroke="#d8d5d8" stroke-width="6" stroke-linejoin="round" stroke-linecap="round"/>
<polyline points="740,372 730,420 722,462" fill="none" stroke="#d8d5d8" stroke-width="6" stroke-linejoin="round" stroke-linecap="round"/>
<polyline points="800,385 790,440 780,478" fill="none" stroke="#d8d5d8" stroke-width="6" stroke-linejoin="round" stroke-linecap="round"/>
<polyline points="940,408 932,470 925,512" fill="none" stroke="#d8d5d8" stroke-width="7" stroke-linejoin="round" stroke-linecap="round"/>
<polyline points="1000,418 992,480 985,522" fill="none" stroke="#d8d5d8" stroke-width="7" stroke-linejoin="round" stroke-linecap="round"/>
<polyline points="895,455 1040,480" fill="none" stroke="#d8d5d8" stroke-width="6" stroke-linejoin="round" stroke-linecap="round"/>
<polyline points="1044,494 1110,498 1172,503" fill="none" stroke="#d8d5d8" stroke-width="7" stroke-linejoin="round" stroke-linecap="round"/>
<polyline points="1036,570 1090,585 1148,600" fill="none" stroke="#d8d5d8" stroke-width="7" stroke-linejoin="round" stroke-linecap="round"/>
<polyline points="1031,640 1000,650" fill="none" stroke="#d8d5d8" stroke-width="6" stroke-linejoin="round" stroke-linecap="round"/>
<polyline points="1111,790 1160,770 1204,760" fill="none" stroke="#d8d5d8" stroke-width="12" stroke-linejoin="round" stroke-linecap="round"/>
<polyline points="1131,696 1170,705 1204,720" fill="none" stroke="#d8d5d8" stroke-width="9" stroke-linejoin="round" stroke-linecap="round"/>
<polyline points="309,390 350,400 395,420" fill="none" stroke="#d8d5d8" stroke-width="5" stroke-linejoin="round" stroke-linecap="round"/>
<polyline points="309,455 345,470 368,470" fill="none" stroke="#d8d5d8" stroke-width="5" stroke-linejoin="round" stroke-linecap="round"/>
<polyline points="309,580 340,590 395,595" fill="none" stroke="#d8d5d8" stroke-width="7" stroke-linejoin="round" stroke-linecap="round"/>
<polyline points="309,690 362,696" fill="none" stroke="#d8d5d8" stroke-width="8" stroke-linejoin="round" stroke-linecap="round"/>
<polygon points="857,411 892,415 871,489 865,521 857.5,570 830,660 797,783 782,850 742,850 760,783 795,660 825,570 832,521 840,489" fill="#d8d5d8"/>
<circle cx="412" cy="378" r="14" fill="#d8d5d8"/>
</g>
<clipPath id="rc">
<polyline points="477,401.6 575,424.5 648,445 687,455 853,495.6 1036,533 1138,555 1210,572" fill="none" stroke="#000" stroke-width="11"/>
</clipPath>
<mask id="rm" maskUnits="userSpaceOnUse" x="309" y="276" width="895" height="570"><rect x="309" y="276" width="895" height="570" fill="#000"/>
<polyline points="477,401.6 575,424.5 648,445 687,455 853,495.6 1036,533 1138,555 1210,572" fill="none" stroke="#fff" stroke-width="10.500" stroke-linejoin="round"/>
<polyline points="648,445 687,455 853,495.6 1036,533 1138,555 1210,572" fill="none" stroke="#fff" stroke-width="15.500" stroke-linejoin="round"/>
<polyline points="664,343 655,357 647,447 630,542" fill="none" stroke="#fff" stroke-width="9" stroke-linejoin="round"/>
<polyline points="1056,421 1044,496 1036,540 1031,603" fill="none" stroke="#fff" stroke-width="14" stroke-linejoin="round"/>
<polyline points="582,392 575,424 560,484 542,542" fill="none" stroke="#fff" stroke-width="6"/>
<polygon points="857,411 892,415 871,489 865,521 857.5,570 830,660 797,783 782,850 742,850 760,783 795,660 825,570 832,521 840,489" fill="#fff"/>
</mask>
<g mask="url(#rm)">
<ellipse cx="572" cy="424" rx="92" ry="24" fill="url(#rr)" opacity="0.85" transform="rotate(13 572 424)"/>
<ellipse cx="649" cy="445" rx="15" ry="50" fill="url(#rr)" opacity="0.9" transform="rotate(5 649 445)"/>
<ellipse cx="649" cy="445" rx="55" ry="18" fill="url(#rr)" opacity="0.7" transform="rotate(13 649 445)"/>
<ellipse cx="868" cy="455" rx="46" ry="95" fill="url(#rr)" opacity="0.8" transform="rotate(12 868 455)"/>
<ellipse cx="855" cy="497" rx="34" ry="40" fill="url(#rr)" opacity="0.9" transform="rotate(12 855 497)"/>
<ellipse cx="900" cy="505" rx="150" ry="30" fill="url(#rr)" opacity="0.6" transform="rotate(13 900 505)"/>
<ellipse cx="1048" cy="536" rx="100" ry="26" fill="url(#rr)" opacity="0.75" transform="rotate(12 1048 536)"/>
<ellipse cx="1040" cy="534" rx="20" ry="36" fill="url(#rr)" opacity="0.85" transform="rotate(8 1040 534)"/>
</g>
<g filter="url(#pk)">
<path d="M779 517 L826 528 L822 548 L805 562 L796 592 L780 588 L790 552Z" fill="#d2dbc6"/>
<path d="M884 445 L890 458 L896 497 L868 490Z" fill="#d2dbc8"/>
<path d="M1046 680 Q1060 672 1078 680 L1092 678 L1100 668 L1112 660 L1118 648 L1128 650 L1122 690 L1104 694 L1090 704 L1080 724 L1078 748 L1062 758 L1040 752 L1036 722 L1032 700Z" fill="#ced7c1"/>
<path d="M591 511 L606 505 L596 524 L586 530Z" fill="#bccbb0"/>
<path d="M683 462 L706 466 L709 473 L684 469Z" fill="#c5d2c0"/>
<circle cx="806" cy="533" r="4" fill="#b3c49a"/>
<circle cx="813" cy="527" r="3.5" fill="#b3c49a"/>
<circle cx="818" cy="535" r="3.5" fill="#b3c49a"/>
<circle cx="800" cy="578" r="3.5" fill="#b3c49a"/>
<circle cx="888" cy="488" r="3.5" fill="#b3c49a"/>
<circle cx="1040" cy="722" r="4.5" fill="#b3c49a"/>
<circle cx="1112" cy="682" r="4" fill="#b3c49a"/>
<circle cx="594" cy="514" r="3" fill="#b3c49a"/>
</g>
<path d="M681 462 L707 466 L711 476" fill="none" stroke="#a9dde9" stroke-width="1.600"/><path d="M712 455 L718 447 L724 455" fill="none" stroke="#a9dde9" stroke-width="1.600"/>
<polygon points="531,327 560,333 557,350 528,344" fill="url(#ho)"/>
<polygon points="583,335 596,338 593,350 580,346" fill="url(#ho)"/>
<polygon points="596,375 612,375 625,388 618,396 608,386 595,385" fill="url(#ho)"/>
<polygon points="555,383 564,386 555,412 545,409" fill="url(#ho)"/>
<polygon points="579,410 590,413 588,427 576,424" fill="url(#ho)"/>
<polygon points="594,439 607,443 603,458 590,454" fill="url(#ho)"/>
<polygon points="611,444 623,447 620,459 608,456" fill="url(#ho)"/>
<polygon points="603,482 613,485 610,496 600,493" fill="url(#ho)"/>
<polygon points="577,499 590,502 587,516 574,512" fill="url(#ho)"/>
<polygon points="574,517 584,520 581,534 570,530" fill="url(#ho)"/>
<polygon points="927,470 946,470 945,484 931,483 927,478" fill="url(#ho)"/>
<polygon points="965,475 979,475 977,510 960,508 962,484" fill="url(#ho)"/>
<polygon points="1110,647 1116,641 1124,649 1118,660 1106,655" fill="url(#ho)"/>
<polygon points="530,390 547,396 541,413 525,405" fill="url(#hr)" stroke="#d8707e" stroke-width=".4"/>
<polygon points="660,464 679,469 675,485 657,479" fill="url(#hr)" stroke="#d8707e" stroke-width=".4"/>
<polygon points="693,443 712,447 702,456 690,452" fill="url(#hr)" stroke="#d8707e" stroke-width=".4"/>
<polygon points="772,494 791,499 782,533 765,528" fill="url(#hr)" stroke="#d8707e" stroke-width=".4"/>
<polygon points="909,482 918,479 938,484 937,498 916,497" fill="url(#hr)" stroke="#d8707e" stroke-width=".4"/>
<polygon points="1081,669 1092,671 1091,677 1080,675" fill="url(#hr)" stroke="#d8707e" stroke-width=".4"/>
<polygon points="1087,724 1109,729 1108,736 1086,731" fill="url(#hr)" stroke="#d8707e" stroke-width=".4"/>
<circle cx="570" cy="411" r="59" fill="none" stroke="#e2707e" stroke-width=".8" stroke-dasharray="3 1.800"/>
<circle cx="570" cy="411" r="92" fill="none" stroke="#e2707e" stroke-width=".8" stroke-dasharray="3 1.800"/>
<circle cx="570" cy="411" r="113" fill="none" stroke="#e2707e" stroke-width=".8" stroke-dasharray="3 1.800"/>
<circle cx="685.5" cy="459.5" r="27" fill="none" stroke="#e2707e" stroke-width=".8" stroke-dasharray="3 1.800"/>
<circle cx="685.5" cy="459.5" r="40" fill="none" stroke="#e2707e" stroke-width=".8" stroke-dasharray="3 1.800"/>
<circle cx="892" cy="479" r="48" fill="none" stroke="#e2707e" stroke-width=".8" stroke-dasharray="3 1.800"/>
<circle cx="892" cy="479" r="75" fill="none" stroke="#e2707e" stroke-width=".8" stroke-dasharray="3 1.800"/>
<circle cx="892" cy="479" r="102" fill="none" stroke="#e2707e" stroke-width=".8" stroke-dasharray="3 1.800"/>
<circle cx="1069" cy="694" r="48" fill="none" stroke="#e2707e" stroke-width=".8" stroke-dasharray="3 1.800"/>
<circle cx="1069" cy="694" r="68" fill="none" stroke="#e2707e" stroke-width=".8" stroke-dasharray="3 1.800"/>
<circle cx="1069" cy="694" r="91" fill="none" stroke="#e2707e" stroke-width=".8" stroke-dasharray="3 1.800"/>
<path d="M586 347 L548 400 M590 347 L612 440 M598 345 L620 440 M560 398 L578 415 M570 380 L600 370 M607 490 L612 440" stroke="#e59aa4" stroke-width=".5" stroke-dasharray="1.500 1.500" fill="none"/>
<path d="M536 506 V696 M676 492 V612 M862 543 V730 M1080 503 V617" stroke="#e2707e" stroke-width=".6" fill="none"/>
<text x="543" y="341" font-size="6.800" fill="#333" text-anchor="middle">1</text>
<text x="589" y="345" font-size="6.800" fill="#333" text-anchor="middle">2</text>
<text x="609" y="383" font-size="6.800" fill="#333" text-anchor="middle">3</text>
<text x="553" y="400" font-size="6.800" fill="#333" text-anchor="middle">3</text>
<text x="537" y="404" font-size="6.800" fill="#333" text-anchor="middle">4</text>
<text x="584" y="421" font-size="6.800" fill="#333" text-anchor="middle">5</text>
<text x="598" y="451" font-size="6.800" fill="#333" text-anchor="middle">6</text>
<text x="616" y="454" font-size="6.800" fill="#333" text-anchor="middle">3</text>
<text x="607" y="491" font-size="6.800" fill="#333" text-anchor="middle">7</text>
<text x="582" y="509" font-size="6.800" fill="#333" text-anchor="middle">7</text>
<text x="578" y="527" font-size="6.800" fill="#333" text-anchor="middle">7</text>
<text x="594" y="516" font-size="6.800" fill="#333" text-anchor="middle">8</text>
<text x="668" y="477" font-size="6.800" fill="#333" text-anchor="middle">9</text>
<text x="699" y="452" font-size="6.800" fill="#333" text-anchor="middle">10</text>
<text x="694" y="473" font-size="6.800" fill="#333" text-anchor="middle">11</text>
<text x="779" y="515" font-size="6.800" fill="#333" text-anchor="middle">12</text>
<text x="799" y="543" font-size="6.800" fill="#333" text-anchor="middle">13</text>
<text x="883" y="477" font-size="6.800" fill="#333" text-anchor="middle">14</text>
<text x="924" y="493" font-size="6.800" fill="#333" text-anchor="middle">15</text>
<text x="936" y="480" font-size="6.800" fill="#333" text-anchor="middle">16</text>
<text x="969" y="495" font-size="6.800" fill="#333" text-anchor="middle">16</text>
<text x="1115" y="654" font-size="6.800" fill="#333" text-anchor="middle">17</text>
<text x="1086" y="676" font-size="6.800" fill="#333" text-anchor="middle">17</text>
<text x="1097" y="733" font-size="6.800" fill="#333" text-anchor="middle">17</text>
<text x="1063" y="706" font-size="6.800" fill="#333" text-anchor="middle">18</text>
<text transform="translate(533.2 684) rotate(-90)" font-size="12.3" font-weight="700" fill="#ec6f7a" stroke="#ec6f7a" stroke-width=".55" textLength="50.8" lengthAdjust="spacingAndGlyphs">CULTURE</text>
<text transform="translate(673.7 610.7) rotate(-90)" font-size="12.3" font-weight="700" fill="#ec6f7a" stroke="#ec6f7a" stroke-width=".55" textLength="74" lengthAdjust="spacingAndGlyphs">HOT SPRINGS</text>
<text transform="translate(860 729) rotate(-90)" font-size="12.3" font-weight="700" fill="#ec6f7a" stroke="#ec6f7a" stroke-width=".55" textLength="57" lengthAdjust="spacingAndGlyphs">HARMONY</text>
<text transform="translate(1077.8 547) rotate(-90)" font-size="12.3" font-weight="700" fill="#ec6f7a" stroke="#ec6f7a" stroke-width=".55" textLength="43.5" lengthAdjust="spacingAndGlyphs">HEALTH</text>
<text x="539.4" y="637.0" font-size="6.3" fill="#222">1. 온천 체험탕</text>
<text x="539.4" y="645.1" font-size="6.3" fill="#222">2. 전시 관리동</text>
<text x="539.4" y="653.2" font-size="6.3" fill="#222">3. 전시관</text>
<text x="539.4" y="661.2" font-size="6.3" fill="#222">4. 뉴트로 상점</text>
<text x="539.4" y="669.3" font-size="6.3" fill="#222">5. 입욕제 공방</text>
<text x="539.4" y="677.4" font-size="6.3" fill="#222">6. 게스트하우스 관리동</text>
<text x="539.4" y="685.5" font-size="6.3" fill="#222">7. 게스트하우스</text>
<text x="539.4" y="693.6" font-size="6.3" fill="#222">8. 안뜰공원</text>
<text x="678.7" y="593.5" font-size="6.3" fill="#222">9. 온천 문학관</text>
<text x="678.7" y="601.6" font-size="6.3" fill="#222">10. 일자리 센터</text>
<text x="678.7" y="609.7" font-size="6.3" fill="#222">11. 족욕공원</text>
<text x="865" y="696.5" font-size="6.3" fill="#222">12. 도서관</text>
<text x="865" y="704.6" font-size="6.3" fill="#222">13. 야외 도서</text>
<text x="865" y="712.7" font-size="6.3" fill="#222">14. 조각광장</text>
<text x="865" y="720.7" font-size="6.3" fill="#222">15. 커뮤니티센터</text>
<text x="865" y="728.8" font-size="6.3" fill="#222">16. 노인다문화돌봄센터</text>
<text x="1082.5" y="509.2" font-size="6.3" fill="#222">17. 치유의 숲(웰니스센터)</text>
<text x="1082.5" y="516.8" font-size="6.3" fill="#222">18. 공유텃밭, 온실</text>
<text x="332" y="812" font-size="10.500" font-weight="700" fill="#111" text-anchor="middle">N</text>
<circle cx="332" cy="827.500" r="10.500" fill="none" stroke="#111" stroke-width=".8"/><path d="M332 815v24M320 827.500h24" stroke="#111" stroke-width=".7"/>
<rect x="350" y="803.500" width="27" height="12.500" fill="url(#ho)"/>
<rect x="350" y="823" width="27" height="12.500" fill="url(#hr)"/>
<text x="381" y="813.500" font-size="9.500" fill="#333">리모델링</text>
<text x="381" y="833" font-size="9.500" fill="#333">신축</text>
</g>
</svg><!--MAPEND-->
  <div class="abs" style="left:135px;top:675px;font-size:9.500px;color:#333">History</div>
  <div class="abs" style="left:455px;top:675px;font-size:9.500px;color:#333">Concept</div>
  <div class="abs" style="left:595px;top:675px;font-size:9.500px;color:#333">Design Strategy</div>
  <div class="abs" style="left:1149px;top:0;width:12px;height:688px;background:#f3f3f3"></div>
  <div class="abs" style="left:1150px;top:493px;width:9px;height:62px;background:#c2c2c2"></div>
  <svg class="abs" style="left:1151px;top:4px" width="8" height="6" viewBox="0 0 8 6"><path d="M4 1L7 5H1z" fill="#444"/></svg>
  <svg class="abs" style="left:1151px;top:676px" width="8" height="6" viewBox="0 0 8 6"><path d="M4 5L7 1H1z" fill="#444"/></svg>
  <div class="abs" style="left:13px;top:685px;width:1104px;height:3px;background:#bdbdbd"></div>
 </div>
</div>
<svg class="abs" style="left:1340px;top:513px" width="7" height="32" viewBox="0 0 7 32"><path d="M1.500 0v32M5.200 0v32" stroke="#a8a8a8" stroke-width="1"/></svg>
<div class="abs" style="left:1425px;top:168px;width:210px;height:122px;background:linear-gradient(180deg,#d4e777 0%,#b5e23c 22%,#86d80f 48%,#5bbd14 52%,#8fd025 70%,#e6ee72 92%,#f0f27f 100%)"></div>
<div class="tile" style="left:1430px;top:173px"><svg class="v" width="200" height="112" viewBox="0 0 200 112"><defs><filter id="b1" x="-5%" y="-5%" width="110%" height="110%"><feGaussianBlur stdDeviation="0.9"/></filter><clipPath id="c1"><rect x="25" y="0" width="150" height="112"/></clipPath></defs><rect width="200" height="112" fill="#000"/>
<g clip-path="url(#c1)"><g filter="url(#b1)">
<rect x="25" y="0" width="150" height="112" fill="#dfe1e3"/>
<rect x="25" y="0" width="86" height="52" fill="#fdfdfe"/>
<rect x="25" y="50" width="30" height="62" fill="#cfd3d7"/>
<rect x="25" y="48" width="16" height="10" fill="#9a9fa3"/>
<rect x="109" y="0" width="12" height="60" fill="#e6e6e4"/>
<rect x="119" y="0" width="56" height="112" fill="#cfd9d2"/>
<rect x="121" y="28" width="20" height="40" fill="#e4e9e3"/>
<rect x="146" y="36" width="22" height="50" fill="#d6e4d8"/>
<rect x="146" y="74" width="18" height="38" fill="#dce6dd"/>
<rect x="150" y="2" width="17" height="27" fill="#3a2f2c"/>
<rect x="122" y="3" width="26" height="24" fill="#d9d6d0"/>
<path d="M119 27 L175 35 V38 L119 30Z" fill="#7b5c42"/>
<path d="M119 50 L170 82 V86 L119 54Z" fill="#7b5c42"/>
<rect x="140.500" y="0" width="4" height="112" fill="#222"/>
<rect x="118" y="28" width="2.500" height="40" fill="#222"/>
<rect x="166" y="0" width="9" height="112" fill="#1c1c1c"/>
<path d="M120 60 L142 80 L142 112 L120 112Z" fill="#4a4a48" opacity=".6"/>
<path d="M42 40 Q44 33 56 33 H104 Q113 34 114 44 V92 H42Z" fill="#1d222c"/>
<path d="M36 88 Q34 62 46 56 L60 58 L64 74 L56 86Z" fill="#cf967e"/>
<ellipse cx="70" cy="25" rx="23.500" ry="19" fill="#2b2527"/>
<ellipse cx="67" cy="49" rx="18.500" ry="22" fill="#cf9880"/>
<path d="M49 41 Q52 25 68 25 Q82 26 88 40 L93 30 L60 12 L47 26Z" fill="#2b2527"/>
<path d="M52 45 q5 -2 9 0 M68 44 q5 -2 9 1" stroke="#5a3c34" stroke-width="1.300" fill="none"/>
<path d="M61 58 q6 3 12 -1" stroke="#f1e9e8" stroke-width="1.800" fill="none"/>
<path d="M62 76 L72 68 L88 48 L112 57 L124 112 L52 112 L54 86Z" fill="#0e0e12"/>
<path d="M67 71 L80 73 L89 67 L88 82 L79 88 L70 84Z" fill="#e4c0c8"/>
<path d="M73 86 L87 81 L88 98 L80 100Z" fill="#9c4450"/>
<path d="M112 57 Q124 62 130 76 L144 112 L122 112Z" fill="#c5656d"/>
<path d="M36 85 L54 85 L52 93 L36 93Z" fill="#c5656d"/>
<circle cx="89" cy="41" r="1.800" fill="#fff"/>
</g></g></svg><div class="lbl nm" style="left:1px;">1조 최광휴</div></div>
<div class="tile" style="left:1637px;top:173px"><svg class="v" width="200" height="112" viewBox="0 0 200 112"><defs><filter id="b2" x="-5%" y="-5%" width="110%" height="110%"><feGaussianBlur stdDeviation="0.8"/></filter><clipPath id="c2"><rect x="50" y="6" width="100" height="100"/></clipPath></defs><g clip-path="url(#c2)"><g filter="url(#b2)">
<rect x="50" y="6" width="100" height="100" fill="#6f7c9c"/>
<path d="M50 6 H150 V40 L62 8Z" fill="#56627f"/>
<path d="M62 6 L150 36 V56 L50 20 V6Z" fill="#7c8db0"/>
<path d="M50 8 L150 44 V52 L50 20Z" fill="#2c3348"/>
<path d="M120 6 H150 V30Z" fill="#3b4052"/>
<path d="M50 20 L118 46 L118 78 L50 70Z" fill="#8b4c60"/>
<rect x="50" y="36" width="25" height="14" fill="#eef1f2"/>
<rect x="50" y="30" width="26" height="7" fill="#3a3245"/>
<path d="M50 56 L100 66 V100 H50Z" fill="#5d6888"/>
<path d="M112 40 L150 56 V100 L112 96Z" fill="#8d97b5"/>
<path d="M122 60 L150 66 V72 L122 66Z" fill="#3a4156"/>
<rect x="53" y="62" width="10" height="2" fill="#dfe3ea"/><rect x="76" y="66" width="9" height="2" fill="#dfe3ea"/>
<rect x="50" y="84" width="100" height="3" fill="#dfe2e8" opacity=".7"/>
<path d="M66 106 Q74 92 92 86 H118 Q134 90 140 106Z" fill="#17171a"/>
<ellipse cx="105" cy="66" rx="16" ry="22" fill="#c79a84"/>
<path d="M88 62 Q86 38 106 36 Q126 38 123 62 Q120 48 106 46 Q92 48 88 62Z" fill="#1f1b1c"/>
<path d="M92 60 h11 v6 h-11z M107 60 h11 v6 h-11z" fill="none" stroke="#3a3434" stroke-width="1"/>
</g></g></svg><div class="lbl" style="left:1px;"><svg width="18" height="20" viewBox="0 0 18 20"><g fill="#ff5a5a"><rect x="5.300" y="1.500" width="7" height="11.500" rx="3.500"/><path d="M3.800 9.500c0 6.800 10 6.800 10 0" fill="none" stroke="#ff5a5a" stroke-width="1.500"/><rect x="8" y="14" width="1.700" height="3"/><rect x="5.600" y="16.400" width="6.600" height="1.600"/></g><path d="M1 19.200 L17.200 2.600" stroke="#ff5a5a" stroke-width="1.350"/></svg>이기석_건축학부</div></div>
<div class="tile" style="left:1430px;top:293px"><svg class="v" width="200" height="112" viewBox="0 0 200 112"><defs><filter id="b3" x="-5%" y="-5%" width="110%" height="110%"><feGaussianBlur stdDeviation="1.6"/></filter></defs><g filter="url(#b3)">
<rect x="-5" y="-5" width="210" height="122" fill="#df9f80"/>
<path d="M-5 -5 H205 V50 L150 48 L70 24 L-5 8Z" fill="#6a5546"/>
<path d="M-5 6 L70 24 L150 50 L205 52 V62 L140 58 L60 34 L-5 18Z" fill="#b78a72"/>
<path d="M150 -5 H205 V30 L160 14Z" fill="#a8a193"/>
<path d="M-5 60 L120 70 L120 117 L-5 117Z" fill="#eaad8f"/>
<path d="M122 112 Q120 50 150 36 Q176 28 196 52 L205 70 V117 H110Z" fill="#241d1c"/>
<path d="M144 66 Q150 40 172 38 Q192 40 198 62 L196 84 L150 84Z" fill="#c9977f"/>
<path d="M140 72 L182 60 Q196 66 194 92 Q188 108 170 108 Q150 104 144 90Z" fill="#dfe7ee"/>
<path d="M150 42 Q166 30 190 44 L176 46 Q160 44 150 52Z" fill="#241d1c"/>
<ellipse cx="176" cy="56" rx="9" ry="8" fill="none" stroke="#d9c9c4" stroke-width="1.200"/>
</g></svg><div class="lbl" style="left:1px;"><svg width="18" height="20" viewBox="0 0 18 20"><g fill="#ff5a5a"><rect x="5.300" y="1.500" width="7" height="11.500" rx="3.500"/><path d="M3.800 9.500c0 6.800 10 6.800 10 0" fill="none" stroke="#ff5a5a" stroke-width="1.500"/><rect x="8" y="14" width="1.700" height="3"/><rect x="5.600" y="16.400" width="6.600" height="1.600"/></g><path d="M1 19.200 L17.200 2.600" stroke="#ff5a5a" stroke-width="1.350"/></svg>1_공주대_고민정</div></div>
<div class="tile" style="left:1637px;top:293px"><svg class="v" width="200" height="112" viewBox="0 0 200 112"><defs><filter id="b4" x="-5%" y="-5%" width="110%" height="110%"><feGaussianBlur stdDeviation="2.4"/></filter></defs><g filter="url(#b4)">
<rect x="-5" y="-5" width="210" height="122" fill="#d3d7d5"/>
<rect x="-5" y="-5" width="210" height="60" fill="#dde2e0"/>
<rect x="20" y="-5" width="11" height="122" fill="#5d6261"/>
<rect x="64" y="-5" width="9" height="122" fill="#6b706f"/>
<rect x="98" y="-5" width="11" height="122" fill="#5f6463"/>
<rect x="122" y="-5" width="6" height="122" fill="#8a8e8c"/>
<rect x="142" y="-5" width="6" height="122" fill="#8f9391"/>
<rect x="160" y="-5" width="5" height="122" fill="#9a9d9b"/>
<rect x="176" y="-5" width="4" height="122" fill="#a5a8a6"/>
<rect x="36" y="10" width="24" height="12" fill="#f3f6f5"/><rect x="76" y="18" width="18" height="14" fill="#f3f6f5"/><rect x="112" y="8" width="26" height="16" fill="#eef2f0"/>
<path d="M130 70 L205 56 V117 H120Z" fill="#a99d72" opacity=".75"/>
<path d="M150 80 L205 70 V117 H150Z" fill="#cfd0c4" opacity=".7"/>
<path d="M-5 40 L40 34 L40 117 L-5 117Z" fill="#b8bcba" opacity=".6"/>
<path d="M20 112 Q30 96 50 94 L80 96 Q96 100 100 112Z" fill="#3b3d32"/>
<ellipse cx="58" cy="78" rx="19" ry="22" fill="#d6b5a4"/>
<path d="M36 76 Q34 52 58 51 Q80 52 78 74 Q60 66 38 78Z" fill="#131315"/>
<path d="M52 78 L77 76 L76 100 Q64 106 54 98Z" fill="#121214"/>
<circle cx="44" cy="80" r="1.600" fill="#fff"/>
</g></svg><div class="lbl" style="left:1px;"><svg width="18" height="20" viewBox="0 0 18 20"><g fill="#ff5a5a"><rect x="5.300" y="1.500" width="7" height="11.500" rx="3.500"/><path d="M3.800 9.500c0 6.800 10 6.800 10 0" fill="none" stroke="#ff5a5a" stroke-width="1.500"/><rect x="8" y="14" width="1.700" height="3"/><rect x="5.600" y="16.400" width="6.600" height="1.600"/></g><path d="M1 19.200 L17.200 2.600" stroke="#ff5a5a" stroke-width="1.350"/></svg>1_순천향대_강민성</div></div>
<div class="tile" style="left:1430px;top:413px"><svg class="v" width="200" height="112" viewBox="0 0 200 112"><defs><filter id="b5" x="-5%" y="-5%" width="110%" height="110%"><feGaussianBlur stdDeviation="1.8"/></filter><clipPath id="c5"><rect x="25" y="0" width="150" height="112"/></clipPath></defs><rect width="200" height="112" fill="#000"/><g clip-path="url(#c5)"><g filter="url(#b5)">
<rect x="20" y="-5" width="160" height="122" fill="#d5d6d7"/>
<rect x="20" y="-5" width="40" height="122" fill="#8d8c88"/>
<rect x="44" y="10" width="14" height="100" fill="#b9baba"/>
<rect x="60" y="-5" width="20" height="122" fill="#a9aaa9"/>
<rect x="82" y="10" width="52" height="102" fill="#e9eaeb"/>
<rect x="136" y="20" width="8" height="92" fill="#c2c5c6"/>
<rect x="146" y="-5" width="34" height="122" fill="#c1c7c6"/>
<rect x="60" y="-5" width="80" height="14" fill="#7d7268" opacity=".7"/>
<path d="M20 62 Q36 54 46 70 L50 112 H20Z" fill="#4a3d33"/>
<path d="M84 112 Q86 92 100 90 H116 Q132 94 136 112Z" fill="#8d8d8b"/>
<ellipse cx="108" cy="82" rx="14" ry="17" fill="#cfa08a"/>
<path d="M92 84 Q90 58 108 57 Q126 58 123 82 Q110 72 94 86Z" fill="#141214"/>
</g></g></svg><div class="lbl" style="left:1px;"><svg width="18" height="20" viewBox="0 0 18 20"><g fill="#ff5a5a"><rect x="5.300" y="1.500" width="7" height="11.500" rx="3.500"/><path d="M3.800 9.500c0 6.800 10 6.800 10 0" fill="none" stroke="#ff5a5a" stroke-width="1.500"/><rect x="8" y="14" width="1.700" height="3"/><rect x="5.600" y="16.400" width="6.600" height="1.600"/></g><path d="M1 19.200 L17.200 2.600" stroke="#ff5a5a" stroke-width="1.350"/></svg>1_순천향대_윤관</div></div>
<div class="tile" style="left:1637px;top:413px"><svg class="v" width="200" height="112" viewBox="0 0 200 112"><defs><filter id="b6" x="-5%" y="-5%" width="110%" height="110%"><feGaussianBlur stdDeviation="1.8"/></filter></defs><g filter="url(#b6)">
<rect x="-5" y="-5" width="210" height="122" fill="#b3b1a6"/>
<rect x="-5" y="-5" width="78" height="122" fill="#d9d3d7"/>
<rect x="-5" y="-5" width="20" height="122" fill="#c9c4c8" opacity=".7"/>
<path d="M73 -5 H180 V40 Q130 30 73 44Z" fill="#8e8c80"/>
<rect x="172" y="-5" width="33" height="122" fill="#f6f6f6"/>
<rect x="160" y="20" width="16" height="97" fill="#dcdcd8" opacity=".8"/>
<circle cx="137" cy="30" r="5" fill="#66685e"/>
<path d="M70 88 L96 84 L96 117 L60 117Z" fill="#efeef2"/>
<path d="M84 117 Q88 100 100 96 H132 Q144 100 146 117Z" fill="#9a8f84"/>
<ellipse cx="116" cy="88" rx="21" ry="24" fill="#dcb29e"/>
<path d="M94 92 Q90 54 116 53 Q142 54 138 90 Q134 72 122 70 Q112 76 106 72 Q98 78 94 92Z" fill="#15130f"/>
</g></svg><div class="lbl" style="left:1px;"><svg width="18" height="20" viewBox="0 0 18 20"><g fill="#ff5a5a"><rect x="5.300" y="1.500" width="7" height="11.500" rx="3.500"/><path d="M3.800 9.500c0 6.800 10 6.800 10 0" fill="none" stroke="#ff5a5a" stroke-width="1.500"/><rect x="8" y="14" width="1.700" height="3"/><rect x="5.600" y="16.400" width="6.600" height="1.600"/></g><path d="M1 19.200 L17.200 2.600" stroke="#ff5a5a" stroke-width="1.350"/></svg>1_순천향대_이석우</div></div>
<div class="tile" style="left:1430px;top:533px"><svg class="v" width="200" height="112" viewBox="0 0 200 112"><defs><filter id="b7" x="-5%" y="-5%" width="110%" height="110%"><feGaussianBlur stdDeviation="1.7"/></filter></defs><g filter="url(#b7)">
<rect x="-5" y="-5" width="210" height="122" fill="#e7ebea"/>
<rect x="-5" y="-5" width="140" height="30" fill="#edf0ef"/>
<rect x="44" y="24" width="54" height="10" fill="#54524f"/>
<rect x="46" y="28" width="16" height="12" fill="#2f2e30"/>
<rect x="64" y="34" width="30" height="40" fill="#c9c6bf" opacity=".7"/>
<rect x="82" y="46" width="18" height="24" fill="#23222a"/>
<rect x="30" y="40" width="30" height="30" fill="#fafafa"/>
<rect x="130" y="-5" width="75" height="122" fill="#a3aaa6"/>
<rect x="134" y="-5" width="10" height="122" fill="#c9c5b8"/>
<rect x="150" y="-5" width="26" height="122" fill="#8a9b9b"/>
<rect x="176" y="-5" width="14" height="122" fill="#d5dedc"/>
<rect x="190" y="-5" width="15" height="122" fill="#b9b4a7"/>
<rect x="156" y="50" width="22" height="60" fill="#6d7a7b"/>
<path d="M96 117 Q100 96 112 92 H140 Q166 100 172 117Z" fill="#1c1a26"/>
<ellipse cx="121" cy="68" rx="21" ry="24" fill="#e3bdae"/>
<path d="M96 62 Q92 26 122 25 Q152 26 148 60 Q146 66 140 64 Q120 54 100 66Z" fill="#191829"/>
<path d="M110 94 Q120 100 132 94 L134 100 H108Z" fill="#caa090"/>
</g></svg><div class="lbl" style="left:1px;"><svg width="18" height="20" viewBox="0 0 18 20"><g fill="#ff5a5a"><rect x="5.300" y="1.500" width="7" height="11.500" rx="3.500"/><path d="M3.800 9.500c0 6.800 10 6.800 10 0" fill="none" stroke="#ff5a5a" stroke-width="1.500"/><rect x="8" y="14" width="1.700" height="3"/><rect x="5.600" y="16.400" width="6.600" height="1.600"/></g><path d="M1 19.200 L17.200 2.600" stroke="#ff5a5a" stroke-width="1.350"/></svg>1_호서대_장영성</div></div>
<div class="tile" style="left:1637px;top:533px"><svg class="v" width="200" height="112" viewBox="0 0 200 112"><defs><filter id="b8" x="-5%" y="-5%" width="110%" height="110%"><feGaussianBlur stdDeviation="0.9"/></filter></defs><g filter="url(#b8)">
<rect x="-5" y="-5" width="210" height="122" fill="#dbd8d0"/>
<path d="M-5 -5 H40 L44 40 L40 117 H-5Z" fill="#e5e6e8"/>
<path d="M40 -5 H205 V40 L150 34 L46 32Z" fill="#dedbd4"/>
<path d="M46 34 L146 44 L150 117 H40Z" fill="#cfcbbf"/>
<path d="M40 30 L46 32 L44 80 L38 90Z" fill="#f7e9e2"/>
<path d="M148 30 L180 -5 H205 V117 H170Z" fill="#f4f4f6"/>
<path d="M150 28 L178 0 L182 4 L154 32Z" fill="#cfc4e0"/>
<path d="M166 40 L200 26 V44 L170 60Z" fill="#d8d9dd"/>
<rect x="182" y="12" width="8" height="12" fill="#2b3a6a"/><rect x="192" y="8" width="8" height="18" fill="#6a6570"/>
<rect x="160" y="36" width="12" height="8" fill="#555"/>
<rect x="158" y="48" width="9" height="8" fill="#2e4a50"/>
<path d="M172 76 L198 66 V92 L176 98Z" fill="#d9d4c0"/>
<path d="M176 74 L196 68 V90 L180 94Z" fill="#2a2a28"/><rect x="182" y="72" width="3" height="20" fill="#e8d36a"/><rect x="188" y="72" width="4" height="18" fill="#f1f1f1"/>
<path d="M168 100 L205 92 V117 H172Z" fill="#eeeef0"/>
<path d="M186 104 L205 100 V117 H190Z" fill="#5a4a34"/>
<path d="M36 66 L40 62 H64 V64 H42 L32 112 H28Z" fill="#222"/>
<path d="M30 74 H58 V76 H30Z" fill="#333"/>
<path d="M36 74 Q42 70 42 82 L40 100 L30 108Z" fill="#1f2024"/>
<path d="M44 78 L52 70 L62 78" stroke="#b48a5a" stroke-width="1.300" fill="none"/>
<path d="M26 117 L40 96 L70 100 L72 117Z" fill="#4a4b52"/>
<path d="M70 117 Q72 100 86 96 L128 98 Q150 104 160 117Z" fill="#f2f4f8"/>
<ellipse cx="94" cy="72" rx="27" ry="34" fill="#d9a58e"/>
<path d="M66 70 Q58 30 92 25 Q124 26 122 62 Q118 46 100 44 Q80 44 72 54 Q68 62 66 70Z" fill="#2a221f"/>
<circle cx="82" cy="62" r="9.500" fill="#dcae98" stroke="#1c1716" stroke-width="2.600"/>
<circle cx="107" cy="60" r="9.500" fill="#dcae98" stroke="#1c1716" stroke-width="2.600"/>
<path d="M91 60 Q94 57 98 59" stroke="#1c1716" stroke-width="2" fill="none"/>
<path d="M92 88 Q96 80 100 92 L104 112 L94 112Z" fill="#d49a84"/>
<path d="M84 86 Q94 92 106 86" stroke="#a8504a" stroke-width="2" fill="none"/>
</g></svg><div class="lbl nm" style="left:1px;">1_호서대_이상훈</div></div>
<div class="tile" style="left:1430px;top:653px"><svg class="v" width="200" height="112" viewBox="0 0 200 112"><defs><filter id="b9" x="-5%" y="-5%" width="110%" height="110%"><feGaussianBlur stdDeviation="1.5"/></filter></defs><g filter="url(#b9)">
<rect x="-5" y="-5" width="210" height="122" fill="#7b8582"/>
<rect x="-5" y="-5" width="22" height="122" fill="#a3a9a5"/>
<path d="M16 -5 H82 V34 Q50 46 20 34Z" fill="#55b4bd"/>
<path d="M30 -5 H58 V26 H32Z" fill="#74d4dc"/>
<path d="M60 -5 H84 V38 L62 40Z" fill="#3e8f96"/>
<path d="M82 -5 H132 V44 Q110 52 86 40Z" fill="#15191a"/>
<path d="M-5 58 Q50 40 112 56 L100 117 H-5Z" fill="#8b9490"/>
<path d="M30 66 Q66 54 100 70 L92 100 L44 104Z" fill="#66706d"/>
<path d="M-5 84 L60 78 L80 117 H-5Z" fill="#9aa19d"/>
<path d="M128 -5 H205 V62 L168 40Z" fill="#0c0d0e"/>
<path d="M112 -5 H142 V8 L118 14Z" fill="#c4c8c5"/>
<path d="M66 117 Q80 74 118 62 L150 70 L205 78 V117Z" fill="#e6e6e4"/>
<path d="M116 117 Q110 30 146 2 Q176 -6 184 40 L198 117 H170 L176 70 L140 70 L140 117Z" fill="#100e10"/>
<path d="M128 40 Q150 24 174 44 L176 78 L132 78Z" fill="#d9b3a7"/>
<path d="M126 52 Q138 22 160 28 Q178 34 178 54 Q166 38 152 40 Q138 44 126 52Z" fill="#2a1c18"/>
<path d="M128 57 L152 52 L174 58 Q176 84 152 92 Q134 86 128 57Z" fill="#eff1f3"/>
<path d="M134 86 Q150 100 168 84 L166 117 H140Z" fill="#4a4946"/>
</g></svg><div class="lbl" style="left:1px;"><svg width="18" height="20" viewBox="0 0 18 20"><g fill="#ff5a5a"><rect x="5.300" y="1.500" width="7" height="11.500" rx="3.500"/><path d="M3.800 9.500c0 6.800 10 6.800 10 0" fill="none" stroke="#ff5a5a" stroke-width="1.500"/><rect x="8" y="14" width="1.700" height="3"/><rect x="5.600" y="16.400" width="6.600" height="1.600"/></g><path d="M1 19.200 L17.200 2.600" stroke="#ff5a5a" stroke-width="1.350"/></svg>1_공주대_한기진</div></div>
<div class="tile" style="left:1637px;top:653px"><div class="big" style="top:36px;letter-spacing:0.6px">1_공주대_박소연...</div><div class="lbl nm" style="left:1px;">1_공주대_박소연<span style="letter-spacing:-.7px">(pc)</span></div></div>
<div class="tile" style="left:1430px;top:773px"><div class="big" style="top:36px;letter-spacing:0.6px">1_남서울대_김민서</div><div class="lbl" style="left:1px;"><svg width="18" height="20" viewBox="0 0 18 20"><g fill="#ff5a5a"><rect x="5.300" y="1.500" width="7" height="11.500" rx="3.500"/><path d="M3.800 9.500c0 6.800 10 6.800 10 0" fill="none" stroke="#ff5a5a" stroke-width="1.500"/><rect x="8" y="14" width="1.700" height="3"/><rect x="5.600" y="16.400" width="6.600" height="1.600"/></g><path d="M1 19.200 L17.200 2.600" stroke="#ff5a5a" stroke-width="1.350"/></svg>1_남서울대_김민서</div></div>
<div class="tile" style="left:1637px;top:773px"><div class="big" style="top:36px;letter-spacing:0.6px">1_공주대_박소연</div><div class="lbl" style="left:1px;"><svg width="18" height="20" viewBox="0 0 18 20"><g fill="#ff5a5a"><rect x="5.300" y="1.500" width="7" height="11.500" rx="3.500"/><path d="M3.800 9.500c0 6.800 10 6.800 10 0" fill="none" stroke="#ff5a5a" stroke-width="1.500"/><rect x="8" y="14" width="1.700" height="3"/><rect x="5.600" y="16.400" width="6.600" height="1.600"/></g><path d="M1 19.200 L17.200 2.600" stroke="#ff5a5a" stroke-width="1.350"/></svg>1_공주대_박소연</div></div>
<div id="more"><svg class="abs" style="left:36px;top:15px" width="20" height="12" viewBox="0 0 20 12"><path d="M2 2 L10 9.500 L18 2" stroke="#9c9cb2" stroke-width="2.200" fill="none"/></svg></div>
<!-- TOOLBAR -->
<style>
.tb{position:absolute;top:1003px;height:20px;font-size:15.5px;color:#d2d2d2;white-space:nowrap;text-align:center;letter-spacing:.3px;transform:translateX(-50%)}
.car{position:absolute;top:982px}
#leave{position:absolute;left:1762px;top:980px;width:139px;height:34px;border-radius:9px;background:#0f63cf;color:#fff;font-weight:700;font-size:15.500px;line-height:31px;text-align:center;white-space:nowrap;letter-spacing:.45px}
</style>
<svg class="abs" style="left:36px;top:968px" width="36" height="36" viewBox="0 0 36 36"><g fill="#a3a3a3"><rect x="13.600" y="3.900" width="9.200" height="19.300" rx="4.600"/><path d="M10 16.500c0 13.500 16.400 13.500 16.400 0" fill="none" stroke="#a3a3a3" stroke-width="1.700"/><rect x="17.300" y="26.500" width="1.800" height="4"/><rect x="13.600" y="30" width="9" height="1.700" rx=".8"/></g><path d="M4.500 32 L32.500 3.800" stroke="#f0424b" stroke-width="1.900"/></svg>
<svg class="car" style="left:87px" width="12" height="8" viewBox="0 0 12 8"><path d="M2 6.300 L6 2.300 L10 6.300" stroke="#cfcfcf" stroke-width="1.600" fill="none"/></svg>
<div class="tb" style="left:54px">음소거 해제</div>
<svg class="abs" style="left:150px;top:968px" width="40" height="36" viewBox="0 0 40 36"><g fill="#a3a3a3"><rect x="5" y="9" width="21" height="18" rx="4"/><path d="M27.500 15.500 L33.500 11.300 Q35 10.500 35 12.200 V23.800 Q35 25.500 33.500 24.700 L27.500 20.500Z"/></g><path d="M6 32 L34 3.800" stroke="#f0424b" stroke-width="1.900"/></svg>
<svg class="car" style="left:210px" width="12" height="8" viewBox="0 0 12 8"><path d="M2 6.300 L6 2.300 L10 6.300" stroke="#cfcfcf" stroke-width="1.600" fill="none"/></svg>
<div class="tb" style="left:171px">비디오 시작</div>
<svg class="abs" style="left:702px;top:974px" width="34" height="26" viewBox="0 0 34 26" fill="#a8a8a8"><circle cx="11.500" cy="7.500" r="5.200"/><path d="M1 23.500c0-6 4.500-9 10.500-9s10.500 3 10.500 9z"/><circle cx="23.500" cy="9" r="4"/><path d="M20 14.300c1-.4 2.200-.6 3.500-.6c4.600 0 8 2.400 8 7.300h-8c0-2.800-1.300-5.200-3.500-6.700z"/></svg>
<div class="abs" style="left:739px;top:975px;font-size:14px;color:#d2d2d2">31</div>
<div class="tb" style="left:718px">참가자</div>
<svg class="abs" style="left:836px;top:973px" width="28" height="26" viewBox="0 0 28 26"><path d="M6 1.500h16a5 5 0 0 1 5 5v7a5 5 0 0 1-5 5h-9l-6 5.500v-5.500h-1a5 5 0 0 1-5-5v-7a5 5 0 0 1 5-5z" fill="#a8a8a8"/></svg>
<div class="tb" style="left:850px">채팅</div>
<svg class="abs" style="left:946px;top:975px" width="30" height="22" viewBox="0 0 30 22"><rect width="30" height="22" rx="4" fill="#23d959"/><path d="M15 17V6.500M10.500 10.500L15 6l4.500 4.500" stroke="#111" stroke-width="2.200" fill="none"/></svg>
<svg class="car" style="left:1001px" width="12" height="8" viewBox="0 0 12 8"><path d="M2 6.300 L6 2.300 L10 6.300" stroke="#cfcfcf" stroke-width="1.600" fill="none"/></svg>
<div class="tb" style="left:960px;color:#23d959">화면 공유</div>
<svg class="abs" style="left:1059px;top:972px" width="28" height="28" viewBox="0 0 28 28"><circle cx="13.700" cy="13.500" r="11.600" fill="none" stroke="#a8a8a8" stroke-width="1.800"/><circle cx="13.700" cy="13.500" r="8.400" fill="#a8a8a8"/></svg>
<div class="tb" style="left:1073px">기록</div>
<svg class="abs" style="left:1160px;top:974px" width="26" height="26" viewBox="0 0 26 26" fill="#a8a8a8"><rect x="0" y="0" width="11.300" height="11.300" rx="2.300"/><rect x="13.700" y="0" width="11.300" height="11.300" rx="2.300"/><rect x="0" y="13.700" width="11.300" height="11.300" rx="2.300"/><rect x="13.700" y="13.700" width="11.300" height="11.300" rx="2.300"/></svg>
<div class="abs" style="left:1186.500px;top:973.500px;width:20.500px;height:20.500px;border-radius:5.500px;background:#fb3b3f;color:#fff;font-weight:700;font-size:14px;line-height:20px;text-align:center">1</div>
<div class="tb" style="left:1173px">소회의실</div>
<svg class="abs" style="left:1258px;top:970px" width="32" height="30" viewBox="0 0 32 30"><circle cx="14" cy="16.500" r="11" fill="#a8a8a8"/><circle cx="10.200" cy="13.800" r="1.500" fill="#1a1a1a"/><circle cx="17.800" cy="13.800" r="1.500" fill="#1a1a1a"/><path d="M9 19c1.800 3.600 8.200 3.600 10 0" fill="none" stroke="#1a1a1a" stroke-width="1.600" stroke-linecap="round"/><circle cx="25" cy="5.500" r="5.500" fill="#1a1a1a"/><path d="M25 2v7M21.500 5.500h7" stroke="#cfcfcf" stroke-width="1.500"/></svg>
<div class="tb" style="left:1273px">반응</div>
<div id="leave">소회의실 나가기</div>
<!-- TASKBAR -->
<style>
#taskbar{position:absolute;left:0;top:1030px;width:1913px;height:50px;background:linear-gradient(100deg,#e3e6ea 0%,#dde1e5 28%,#dfe2e6 48%,#eaecef 60%,#e5e7ea 70%,#f0f0f1 84%,#f3f3f3 100%);color:#1f1f1f}
#taskbar .ul{position:absolute;top:47px;height:3px;background:#c2084f}
#taskbar .ul i{position:absolute;right:0;top:0;width:10px;height:3px;background:#dd6f9e}
#search{position:absolute;left:57px;top:1px;width:428px;height:48px;background:#fff;font-size:20px;color:#3a3a3a;line-height:49px;padding-left:50px;white-space:nowrap;letter-spacing:.55px}
#taskbar .t{position:absolute;white-space:nowrap}
</style>
<div id="taskbar">
<svg class="abs" style="left:16px;top:15px" width="20" height="20" viewBox="0 0 20 20" fill="#111"><path d="M0 2.800 L8.200 1.700 V9.400 H0Z M9.200 1.500 L20 0 V9.400 H9.200Z M0 10.400 H8.200 V18.200 L0 17.100Z M9.200 10.400 H20 V20 L9.200 18.400Z"/></svg>
<div id="search"><svg class="abs" style="left:13px;top:13px" width="22" height="22" viewBox="0 0 22 22"><circle cx="13.500" cy="8.300" r="6.300" fill="none" stroke="#222" stroke-width="1.600"/><path d="M9 13 L1.500 20.500" stroke="#222" stroke-width="1.700"/></svg>검색하려면 여기에 입력하십시오.</div>
<svg class="abs" style="left:503px;top:14px" width="24" height="22" viewBox="0 0 24 22" fill="none" stroke="#111" stroke-width="1.200"><path d="M3.800 1V20M15.200 1V20M3.800 6.700H15.200M3.800 14.200H15.200M21.500 1V20"/><rect x="20.300" y="7.300" width="2.400" height="2.600" fill="#111" stroke="none"/></svg>
<svg class="abs" style="left:565px;top:10px" width="30" height="30" viewBox="0 0 30 30"><defs><linearGradient id="eg2" x1="0" y1=".3" x2="1" y2=".1"><stop offset="0" stop-color="#2fb2ee"/><stop offset=".45" stop-color="#2cc3c9"/><stop offset="1" stop-color="#62dd58"/></linearGradient><linearGradient id="eg1" x1="0" y1="0" x2=".8" y2="1"><stop offset="0" stop-color="#1b86d8"/><stop offset="1" stop-color="#143f94"/></linearGradient><radialGradient id="eg3" cx=".4" cy=".4" r=".7"><stop offset="0" stop-color="#2a8be0"/><stop offset="1" stop-color="#1558ad"/></radialGradient></defs><circle cx="15" cy="15" r="15" fill="url(#eg2)"/><path d="M.5 12C3 6 10 5.500 14 8.500C9.500 10.500 8 16 11 20.500C14.500 25 22 26 28.300 22C25.500 27.500 20.500 30 15 30C6.500 30 0 23.500 0 15C0 14 .2 13 .5 12Z" fill="url(#eg1)"/><path d="M14 8.500C10 11 9.500 16 12 19.500C15 23.500 22 25 28.300 22C24 23 17 22 15.500 17.500C14.500 14 15.500 11 14 8.500Z" fill="url(#eg3)"/><path d="M15.800 11.800C13.500 13 13.500 16.500 15.500 18.800C18.500 22 24.500 22.500 28.800 21L29.800 17.600L19.300 17.600C19.800 15 18.300 12.600 15.800 11.800Z" fill="#dee2e6"/></svg>
<svg class="abs" style="left:626px;top:9px" width="32" height="32" viewBox="0 0 32 32"><ellipse cx="15" cy="11" rx="13" ry="9" fill="#fdf6f6" stroke="#e25a5a" stroke-width="1.200"/><path d="M6 8 Q14 3 24 9" stroke="#e9a0a0" stroke-width="1" fill="none"/><path d="M9 4 L20 24 M22 5 L12 24" stroke="#9aa0a8" stroke-width="2.400"/><circle cx="10.500" cy="26" r="3.300" fill="none" stroke="#2f7fd6" stroke-width="2.200"/><circle cx="22" cy="26" r="3.300" fill="none" stroke="#2f7fd6" stroke-width="2.200"/></svg>
<svg class="abs" style="left:688px;top:9px" width="32" height="32" viewBox="0 0 32 32"><path d="M1 12 L16 1 L31 12 V28 H1Z" fill="#1565b8"/><path d="M4 8 H28 V22 H4Z" fill="#e8f3fc"/><path d="M1 12 L16 21.500 L31 12 V29 H1Z" fill="#2a9df4"/><path d="M1 29 L16 19 L31 29Z" fill="#55b7f7"/></svg>
<svg class="abs" style="left:750px;top:10px" width="32" height="30" viewBox="0 0 32 30"><path d="M1 3 H12 L15 6 H29 V10 H1Z" fill="#e9a829"/><path d="M1 7.500 H29 V26 H1Z" fill="#fbd465"/><path d="M8 17 H22 V26 H8Z" fill="#2d7dd2"/><path d="M11 20.500 H19 V26 H11Z" fill="#fbd465"/></svg>
<svg class="abs" style="left:812px;top:10px" width="30" height="30" viewBox="0 0 30 30"><rect width="30" height="30" fill="#fae100"/><ellipse cx="15" cy="13.700" rx="11.500" ry="8.700" fill="#3a1d1d"/><path d="M9 20.500 L8 25.500 L13.500 21.500Z" fill="#3a1d1d"/><text x="15" y="16.600" font-family="Liberation Sans,sans-serif" font-weight="700" font-size="7.600" fill="#fae100" text-anchor="middle" letter-spacing="-.2">TALK</text></svg>
<svg class="abs" style="left:875px;top:11px" width="28" height="28" viewBox="0 0 28 28"><rect width="28" height="28" rx="8" fill="#4a8cff"/><rect x="5.500" y="9.500" width="11.500" height="9" rx="2.200" fill="#fff"/><path d="M18 12.800 L22.500 9.800 V18.200 L18 15.200Z" fill="#fff"/></svg>
<div class="ul" style="left:555px;width:51px"></div>
<div class="ul" style="left:617px;width:51px"></div>
<div class="ul" style="left:741px;width:51px"></div>
<div class="ul" style="left:803px;width:51px"><i></i></div>
<div class="ul" style="left:865px;width:51px"><i></i></div>
<svg class="abs" style="left:1304px;top:14px" width="28" height="22" viewBox="0 0 28 22"><defs><linearGradient id="cl" x1="0" y1="0" x2="1" y2="1"><stop offset="0" stop-color="#d8efff"/><stop offset="1" stop-color="#6db6ee"/></linearGradient></defs><path d="M7 19.500a5.500 5.500 0 0 1-.6-10.900A8 8 0 0 1 21.500 7.200A6.200 6.200 0 0 1 21 19.500Z" fill="url(#cl)"/><path d="M3 20.500a4 4 0 0 1 .5-8a6 6 0 0 1 10.500-1.500a4.800 4.800 0 0 1 1 9.500z" fill="#e9f5ff" opacity=".9"/></svg>
<div class="t" style="left:1341px;top:16px;font-size:18.500px;letter-spacing:-.3px">15°C</div>
<div class="t" style="left:1390px;top:12px;font-size:20px">흐림</div>
<svg class="abs" style="left:1451px;top:18px" width="18" height="12" viewBox="0 0 18 12"><path d="M1.500 10 L9 2.500 L16.500 10" stroke="#1f1f1f" stroke-width="1.500" fill="none"/></svg>
<svg class="abs" style="left:1490px;top:13px" width="18" height="24" viewBox="0 0 18 24"><rect x="5" y="1" width="8" height="14" rx="4" fill="#111"/><path d="M2.500 10.500c0 9 13 9 13 0M9 17.500v4M5.500 21.500h7" stroke="#111" stroke-width="1.400" fill="none"/></svg>
<svg class="abs" style="left:1528px;top:15px" width="24" height="20" viewBox="0 0 24 20"><path d="M6 16.500a4.500 4.500 0 0 1-.3-9A6.500 6.500 0 0 1 18 6.500a5 5 0 0 1 .5 10Z" fill="none" stroke="#222" stroke-width="1.500"/><path d="M2.500 2.500 L21 18.500" stroke="#222" stroke-width="1.600"/></svg>
<svg class="abs" style="left:1568px;top:17px" width="24" height="16" viewBox="0 0 24 16"><rect x="4.500" y="3.500" width="17" height="10" fill="none" stroke="#222" stroke-width="1.300"/><rect x="6.500" y="5.500" width="13" height="6" fill="#111"/><rect x="21.500" y="6.500" width="1.800" height="4" fill="#222"/><path d="M1 4.500h3v3H1zM2.500 1.500v3" stroke="#222" stroke-width="1.200" fill="none"/></svg>
<svg class="abs" style="left:1607px;top:14px" width="24" height="22" viewBox="0 0 24 22"><path d="M4.500 3.500H22V15H4.500Z M13 15v4.500M8.500 19.500h9" fill="none" stroke="#222" stroke-width="1.300"/><rect x="2.500" y="1.500" width="4.500" height="6" fill="#f0f0f0" stroke="#222" stroke-width="1.100"/></svg>
<svg class="abs" style="left:1648px;top:14px" width="24" height="22" viewBox="0 0 24 22"><path d="M2 8h3.500L10 3.500v15L5.500 14H2z" fill="none" stroke="#222" stroke-width="1.300"/><path d="M13 8c1.300 1.500 1.300 4.500 0 6M15.800 5.500c2.500 3 2.500 8 0 11" stroke="#222" stroke-width="1.300" fill="none"/><path d="M18.500 3c3.500 4.500 3.500 11.500 0 16" stroke="#aaa" stroke-width="1.200" fill="none"/></svg>
<svg class="abs" style="left:1692px;top:13px" width="26" height="24" viewBox="0 0 26 24"><path d="M8 20 L16 4.500 Q18 1.500 20.500 3 Q22.500 4.500 21 7 L12.500 21.500 L8.500 23Z M14.500 7.500 L19 10" fill="none" stroke="#222" stroke-width="1.400"/><path d="M10 13.500c-4-1.500-8 0-8 3.500s5 4 7 1.500M14 17c3 1.500 6 .5 9-1.500" stroke="#222" stroke-width="1.300" fill="none"/></svg>
<div class="t" style="left:1735px;top:11px;font-size:25px">A</div>
<div class="t" style="left:1774px;top:2px;font-size:15.500px;letter-spacing:0">오후 2:38</div>
<div class="t" style="left:1766px;top:27px;font-size:15.500px;letter-spacing:-.25px">2022-04-29</div>
<svg class="abs" style="left:1864px;top:10px" width="36" height="34" viewBox="0 0 36 34"><path d="M2 2H22V17H9L5 21V17H2Z" fill="#111"/><path d="M5 6.500H19M5 10H19M5 13.500H14" stroke="#eee" stroke-width="1.400"/><circle cx="20" cy="23.500" r="11" fill="#d2d2d2" stroke="#8f8f8f" stroke-width="1"/><text x="20" y="29.500" font-family="Liberation Sans,sans-serif" font-size="16.500" fill="#111" text-anchor="middle" letter-spacing="-.5">11</text></svg>
</div>
</body>
</html>
